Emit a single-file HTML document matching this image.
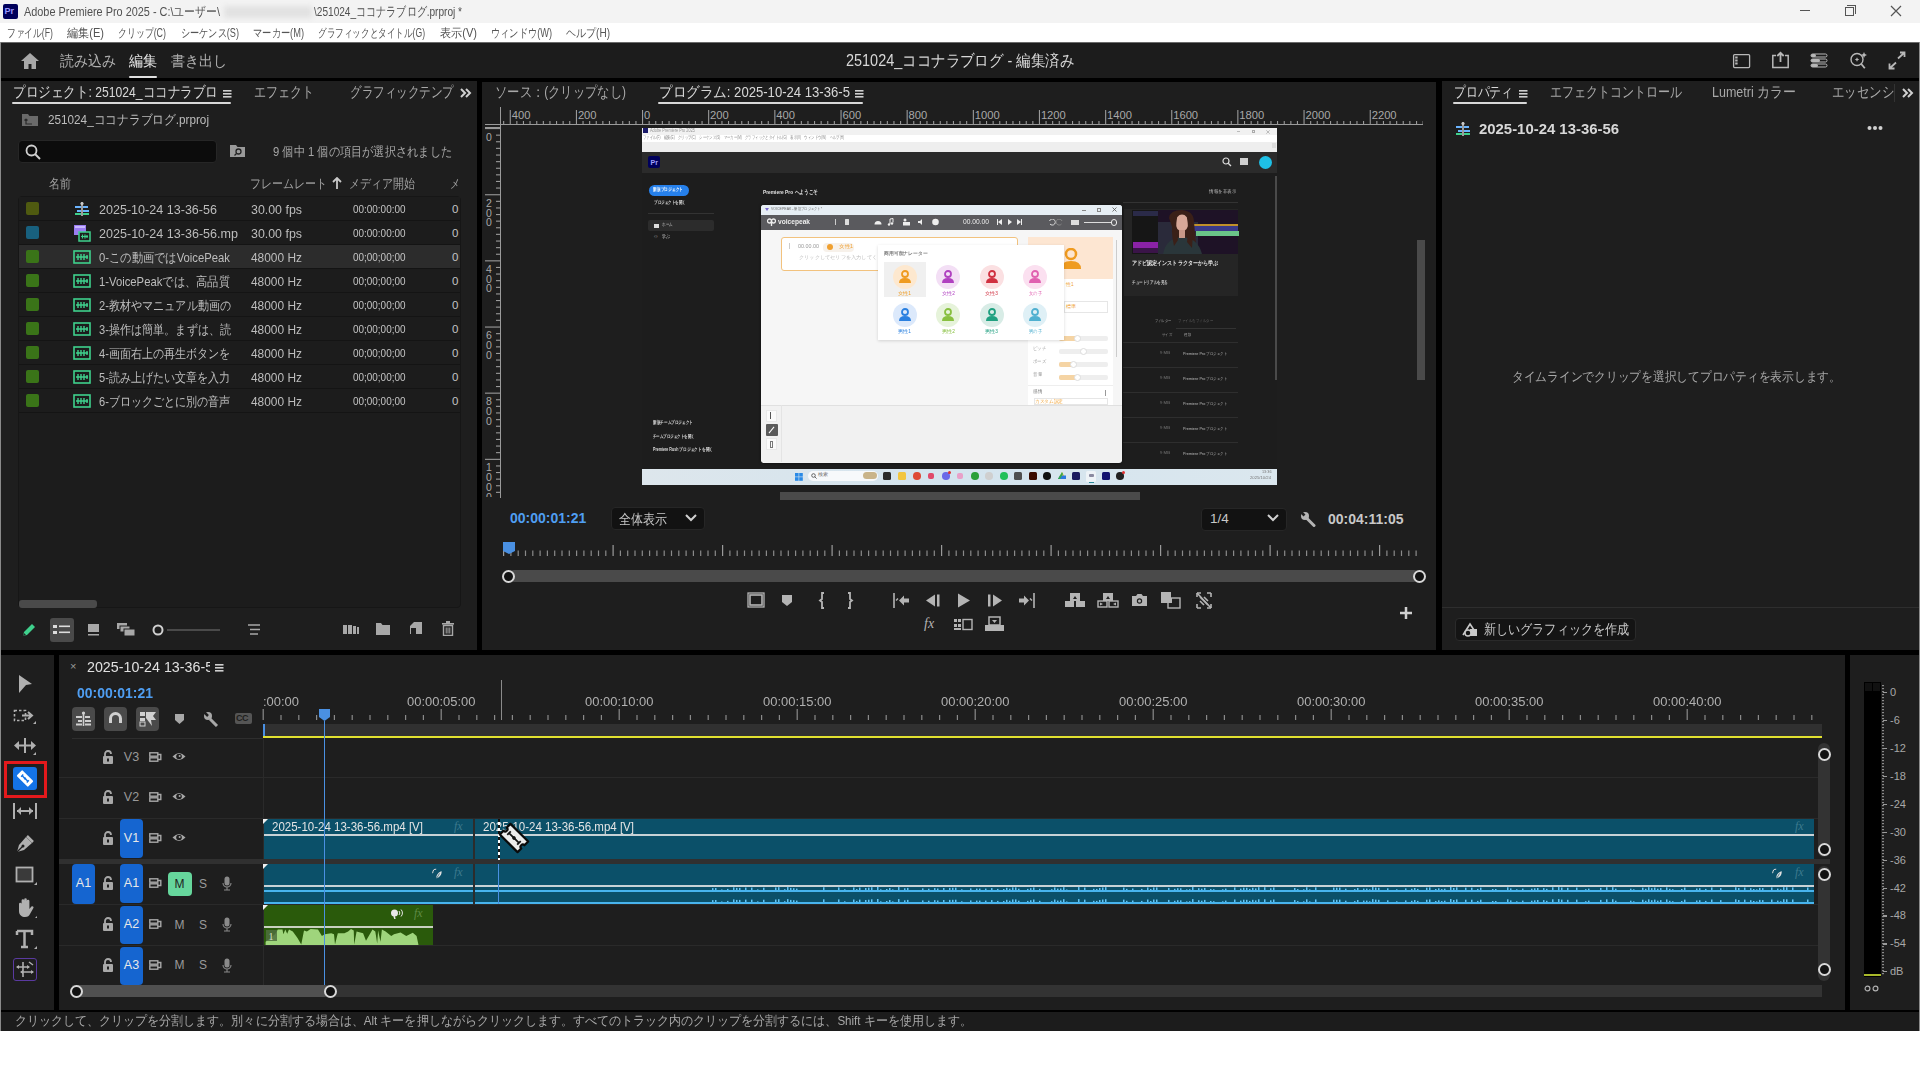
<!DOCTYPE html>
<html><head><meta charset="utf-8"><title>Premiere</title><style>
*{margin:0;padding:0;box-sizing:border-box}
html,body{width:1920px;height:1080px;overflow:hidden;background:#fff;font-family:"Liberation Sans",sans-serif}
.a{position:absolute}
.t{position:absolute;white-space:nowrap;line-height:1}
.pn{position:absolute;background:#1e1e1e}
.ic{position:absolute}
</style></head><body>
<div class="a" style="left:0;top:0;width:1920px;height:23px;background:#f3f3f3"></div>
<div class="a" style="left:3px;top:4px;width:15px;height:15px;background:#00005b;border-radius:2px"></div>
<div class="t" style="left:4.5px;top:7px;font-size:9px;color:#9999ff;font-weight:bold">Pr</div>
<div class="t f" style="left:24px;top:5.1px;width:196px;font-size:13px;color:#505050;">Adobe Premiere Pro 2025 - C:\ユーザー\</div>
<div class="a" style="left:224px;top:6px;width:88px;height:12px;background:#e2e2e2;filter:blur(2.5px)"></div>
<div class="t f" style="left:314px;top:5.1px;width:148px;font-size:13px;color:#505050;">\251024_ココナラブログ.prproj *</div>
<div class="a" style="left:1800px;top:10px;width:10px;height:1px;background:#555"></div>
<div class="a" style="left:1845px;top:7px;width:9px;height:9px;border:1px solid #555"></div>
<div class="a" style="left:1847px;top:5px;width:9px;height:9px;border-top:1px solid #555;border-right:1px solid #555"></div>
<svg class="a" style="left:1890px;top:5px" width="12" height="12"><path d="M1 1L11 11M11 1L1 11" stroke="#555" stroke-width="1.2"/></svg>
<div class="a" style="left:0;top:23px;width:1920px;height:19px;background:#fff"></div>
<div class="t f" style="left:7px;top:26.6px;width:46px;font-size:12px;color:#555;">ファイル(F)</div>
<div class="t f" style="left:67px;top:26.6px;width:37px;font-size:12px;color:#555;">編集(E)</div>
<div class="t f" style="left:118px;top:26.6px;width:48px;font-size:12px;color:#555;">クリップ(C)</div>
<div class="t f" style="left:181px;top:26.6px;width:58px;font-size:12px;color:#555;">シーケンス(S)</div>
<div class="t f" style="left:253px;top:26.6px;width:51px;font-size:12px;color:#555;">マーカー(M)</div>
<div class="t f" style="left:318px;top:26.6px;width:107px;font-size:12px;color:#555;">グラフィックとタイトル(G)</div>
<div class="t f" style="left:440px;top:26.6px;width:37px;font-size:12px;color:#555;">表示(V)</div>
<div class="t f" style="left:491px;top:26.6px;width:61px;font-size:12px;color:#555;">ウィンドウ(W)</div>
<div class="t f" style="left:566px;top:26.6px;width:44px;font-size:12px;color:#555;">ヘルプ(H)</div>
<div class="a" style="left:0;top:42px;width:1920px;height:38px;background:#000"></div>
<div class="a" style="left:1px;top:42px;width:1918px;height:1px;background:#6a6a6a"></div>
<div class="a" style="left:1px;top:43px;width:1918px;height:35px;background:#1c1c1c"></div>
<svg class="a" style="left:20px;top:52px" width="20" height="18"><path d="M10 1L1 9h3v8h4.5v-5h3v5H16V9h3z" fill="#a8a8a8"/></svg>
<div class="t f" style="left:60px;top:53.1px;width:56px;font-size:15px;color:#b0b0b0;">読み込み</div>
<div class="t f" style="left:129px;top:53.1px;width:28px;font-size:15px;color:#e6e6e6;">編集</div>
<div class="a" style="left:129px;top:76px;width:28px;height:2px;background:#e0e0e0;border-radius:1px"></div>
<div class="t f" style="left:171px;top:53.1px;width:56px;font-size:15px;color:#b0b0b0;">書き出し</div>
<div class="t f" style="left:846px;top:52.7px;width:228px;font-size:16px;color:#d8d8d8;">251024_ココナラブログ - 編集済み</div>
<svg class="a" style="left:1732px;top:53px" width="20" height="16"><rect x="1.6" y="1.6" width="16" height="13" rx="1" fill="none" stroke="#b8b8b8" stroke-width="1.3"/><rect x="3.2" y="3.5" width="2.4" height="2" fill="#b8b8b8"/><rect x="3.2" y="6.5" width="2.4" height="2" fill="#b8b8b8"/><rect x="3.2" y="9.5" width="2.4" height="2" fill="#b8b8b8"/></svg>
<svg class="a" style="left:1771px;top:51px" width="19" height="18"><path d="M5 4.5H1.8v12h15.4v-12H14" fill="none" stroke="#b8b8b8" stroke-width="1.5"/><path d="M9.5 11V1.8M6.3 5l3.2-3.2L12.7 5" fill="none" stroke="#b8b8b8" stroke-width="1.8"/></svg>
<svg class="a" style="left:1810px;top:53px" width="18" height="15"><rect x="1" y="1" width="16" height="3" rx="1.5" fill="none" stroke="#b8b8b8" stroke-width="1"/><rect x="1" y="1" width="5" height="3" rx="1.5" fill="#b8b8b8"/><rect x="1" y="6" width="16" height="3" rx="1.5" fill="none" stroke="#b8b8b8" stroke-width="1"/><rect x="1" y="6" width="9" height="3" rx="1.5" fill="#b8b8b8"/><rect x="1" y="11" width="16" height="3" rx="1.5" fill="none" stroke="#b8b8b8" stroke-width="1"/><rect x="1" y="11" width="7" height="3" rx="1.5" fill="#b8b8b8"/></svg>
<svg class="a" style="left:1849px;top:51px" width="19" height="19"><circle cx="8" cy="8.5" r="6" fill="none" stroke="#b8b8b8" stroke-width="1.4"/><path d="M12.3 13l3.5 4.3" stroke="#b8b8b8" stroke-width="1.8"/><path d="M8 6.3l0.7 1.5 1.5 0.7-1.5 0.7L8 10.7l-0.7-1.5-1.5-0.7 1.5-0.7z" fill="#b8b8b8"/><path d="M15 1l0.9 2.1 2.1 0.9-2.1 0.9L15 7l-0.9-2.1-2.1-0.9 2.1-0.9z" fill="#b8b8b8"/></svg>
<svg class="a" style="left:1887px;top:51px" width="20" height="19"><path d="M11 7.5L17.5 1.5M13 1.5h4.5V6" fill="none" stroke="#b8b8b8" stroke-width="1.8"/><path d="M9 11.5L2.5 17.5M2.5 12.5v5h5" fill="none" stroke="#b8b8b8" stroke-width="1.8"/></svg>
<div class="a" style="left:0;top:80px;width:1920px;height:951px;background:#000"></div>
<div class="a" style="left:0;top:42px;width:1px;height:989px;background:#8a8a8a"></div>
<div class="a" style="left:1919px;top:42px;width:1px;height:989px;background:#8a8a8a"></div>
<div class="pn" style="left:1px;top:81px;width:476px;height:569px"></div>
<div class="pn" style="left:482px;top:82px;width:954px;height:568px"></div>
<div class="pn" style="left:1442px;top:81px;width:477px;height:569px"></div>
<div class="pn" style="left:1px;top:655px;width:53px;height:355px"></div>
<div class="pn" style="left:59px;top:655px;width:1786px;height:355px"></div>
<div class="pn" style="left:1850px;top:655px;width:69px;height:355px"></div>
<div class="a" style="left:1px;top:1012px;width:1918px;height:19px;background:#1c1c1c"></div>
<div class="t f" style="left:15px;top:1014.9px;width:957px;font-size:12.5px;color:#a8a8a8;">クリックして、クリップを分割します。別々に分割する場合は、Alt キーを押しながらクリックします。すべてのトラック内のクリップを分割するには、Shift キーを使用します。</div>
<div class="t f" style="left:13px;top:85.4px;width:205px;font-size:14.5px;color:#d8d8d8;">プロジェクト: 251024_ココナラブロ</div>
<svg class="a" style="left:222.5px;top:88.5px" width="9" height="9"><rect x="0" y="1" width="8.5" height="1.6" fill="#d0d0d0"/><rect x="0" y="4" width="8.5" height="1.6" fill="#d0d0d0"/><rect x="0" y="7" width="8.5" height="1.6" fill="#d0d0d0"/></svg>
<div class="a" style="left:12px;top:102px;width:219px;height:2px;background:#d8d8d8;border-radius:1px"></div>
<div class="t f" style="left:254px;top:85.4px;width:60px;font-size:14.5px;color:#a8a8a8;">エフェクト</div>
<div class="t f" style="left:350px;top:85.4px;width:104px;font-size:14.5px;color:#a8a8a8;">グラフィックテンプ</div>
<div class="a" style="left:454px;top:84px;width:3px;height:18px;background:#1e1e1e"></div>
<svg class="a" style="left:459px;top:87px" width="14" height="12"><path d="M2 2l4 4-4 4M7 2l4 4-4 4" fill="none" stroke="#d0d0d0" stroke-width="2"/></svg>
<svg class="a" style="left:22px;top:113px" width="17" height="14"><path d="M0 1h6l1.5 2H16v10H0z" fill="#6a6a6a"/><path d="M4 6v5h6M4 6l-1.5 1.5M4 6l1.5 1.5" stroke="#2a2a2a" stroke-width="1.2" fill="none"/></svg>
<div class="t f" style="left:48px;top:113.1px;width:161px;font-size:13px;color:#bdbdbd;">251024_ココナラブログ.prproj</div>
<div class="a" style="left:18px;top:140px;width:199px;height:23px;background:#0c0c0c;border-radius:4px;border:1px solid #262626"></div>
<svg class="a" style="left:25px;top:144px" width="16" height="16"><circle cx="6.5" cy="6.5" r="5" fill="none" stroke="#d0d0d0" stroke-width="1.8"/><path d="M10 10l5 5" stroke="#d0d0d0" stroke-width="2"/></svg>
<svg class="a" style="left:230px;top:144px" width="16" height="14"><path d="M0 1h6l1.5 2H15v10H0z" fill="#9a9a9a"/><circle cx="8.5" cy="7.5" r="2.5" fill="none" stroke="#222" stroke-width="1.3"/><path d="M6.5 9.5l-2 2" stroke="#222" stroke-width="1.3"/></svg>
<div class="t f" style="left:273px;top:145.1px;width:179px;font-size:13px;color:#a8a8a8;">9 個中 1 個の項目が選択されました</div>
<div class="t f" style="left:49px;top:178.4px;width:22px;font-size:12.5px;color:#a0a0a0;">名前</div>
<div class="t f" style="left:250px;top:178.4px;width:77px;font-size:12.5px;color:#a0a0a0;">フレームレート</div>
<svg class="a" style="left:332px;top:177px" width="10" height="12"><path d="M5 1v11M1 5l4-4 4 4" fill="none" stroke="#c8c8c8" stroke-width="1.8"/></svg>
<div class="t f" style="left:349px;top:178.4px;width:66px;font-size:12.5px;color:#a0a0a0;">メディア開始</div>
<div class="t f" style="left:450px;top:178.4px;width:10px;font-size:12.5px;color:#a0a0a0;">メ</div>
<div class="a" style="left:18px;top:196px;width:443px;height:412px;border:1px solid #161616;border-radius:4px;background:#1c1c1c"></div>
<div class="a" style="left:19px;top:197px;width:441px;height:23px;background:#1c1c1c"></div>
<div class="a" style="left:19px;top:220px;width:441px;height:1px;background:#141414"></div>
<div class="a" style="left:26px;top:202px;width:13px;height:13px;background:#4f5a10;border-radius:2px"></div>
<svg class="a" style="left:74px;top:201px" width="16" height="16"><path d="M8 1v14" stroke="#c8c8c8" stroke-width="1.5"/><circle cx="8" cy="2.5" r="1.6" fill="#c8c8c8"/><rect x="1" y="5" width="6" height="2" fill="#6ab4ff"/><rect x="9" y="5" width="5" height="2" fill="#6ab4ff"/><rect x="3" y="9" width="4" height="2" fill="#6ab4ff"/><rect x="9" y="9" width="6" height="2" fill="#6ab4ff"/><rect x="1" y="12" width="6" height="2" fill="#3fd18d"/><rect x="9" y="12" width="6" height="2" fill="#3fd18d"/></svg>
<div class="t f" style="left:99px;top:202.6px;width:118px;font-size:13px;color:#bdbdbd;">2025-10-24 13-36-56</div>
<div class="t f" style="left:250.5px;top:202.6px;width:51px;font-size:13px;color:#bdbdbd;">30.00 fps</div>
<div class="t f" style="left:352.5px;top:204.1px;width:52.5px;font-size:11px;color:#c4c4c4;">00:00:00:00</div>
<div class="t" style="left:452px;top:203.9px;font-size:11.5px;color:#c4c4c4;">0</div>
<div class="a" style="left:19px;top:221px;width:441px;height:23px;background:#1c1c1c"></div>
<div class="a" style="left:19px;top:244px;width:441px;height:1px;background:#141414"></div>
<div class="a" style="left:26px;top:226px;width:13px;height:13px;background:#18607e;border-radius:2px"></div>
<svg class="a" style="left:73px;top:224px" width="18" height="18"><rect x="1" y="1" width="12" height="10" fill="#9a7cf0"/><rect x="2" y="2" width="10" height="2" fill="#c9b8ff"/><rect x="6" y="8" width="11" height="9" fill="#1e1e1e" stroke="#3fd18d" stroke-width="1.5"/><path d="M8 12.5h7M9.5 10.5v4M12 10.5v4M14 11v3" stroke="#3fd18d" stroke-width="1.2"/></svg>
<div class="t f" style="left:99px;top:226.6px;width:139px;font-size:13px;color:#bdbdbd;">2025-10-24 13-36-56.mp</div>
<div class="t f" style="left:250.5px;top:226.6px;width:51px;font-size:13px;color:#bdbdbd;">30.00 fps</div>
<div class="t f" style="left:352.5px;top:228.1px;width:52.5px;font-size:11px;color:#c4c4c4;">00:00:00:00</div>
<div class="t" style="left:452px;top:227.9px;font-size:11.5px;color:#c4c4c4;">0</div>
<div class="a" style="left:19px;top:245px;width:441px;height:23px;background:#2c2c2c"></div>
<div class="a" style="left:19px;top:268px;width:441px;height:1px;background:#141414"></div>
<div class="a" style="left:26px;top:250px;width:13px;height:13px;background:#3a7418;border-radius:2px"></div>
<svg class="a" style="left:73px;top:250px" width="18" height="14"><rect x="1" y="1" width="16" height="12" fill="none" stroke="#3fd18d" stroke-width="1.6"/><path d="M3 7h12M5 4v6M8 4v6M11 4v6M14 5v4" stroke="#3fd18d" stroke-width="1.4"/></svg>
<div class="t f" style="left:99px;top:250.6px;width:131px;font-size:13px;color:#bdbdbd;">0-この動画ではVoicePeak</div>
<div class="t f" style="left:250.5px;top:250.6px;width:51px;font-size:13px;color:#bdbdbd;">48000 Hz</div>
<div class="t f" style="left:352.5px;top:252.1px;width:52.5px;font-size:11px;color:#c4c4c4;">00;00;00;00</div>
<div class="t" style="left:452px;top:251.9px;font-size:11.5px;color:#c4c4c4;">0</div>
<div class="a" style="left:19px;top:269px;width:441px;height:23px;background:#1c1c1c"></div>
<div class="a" style="left:19px;top:292px;width:441px;height:1px;background:#141414"></div>
<div class="a" style="left:26px;top:274px;width:13px;height:13px;background:#3a7418;border-radius:2px"></div>
<svg class="a" style="left:73px;top:274px" width="18" height="14"><rect x="1" y="1" width="16" height="12" fill="none" stroke="#3fd18d" stroke-width="1.6"/><path d="M3 7h12M5 4v6M8 4v6M11 4v6M14 5v4" stroke="#3fd18d" stroke-width="1.4"/></svg>
<div class="t f" style="left:99px;top:274.6px;width:131px;font-size:13px;color:#bdbdbd;">1-VoicePeakでは、高品質</div>
<div class="t f" style="left:250.5px;top:274.6px;width:51px;font-size:13px;color:#bdbdbd;">48000 Hz</div>
<div class="t f" style="left:352.5px;top:276.1px;width:52.5px;font-size:11px;color:#c4c4c4;">00;00;00;00</div>
<div class="t" style="left:452px;top:275.9px;font-size:11.5px;color:#c4c4c4;">0</div>
<div class="a" style="left:19px;top:293px;width:441px;height:23px;background:#1c1c1c"></div>
<div class="a" style="left:19px;top:316px;width:441px;height:1px;background:#141414"></div>
<div class="a" style="left:26px;top:298px;width:13px;height:13px;background:#3a7418;border-radius:2px"></div>
<svg class="a" style="left:73px;top:298px" width="18" height="14"><rect x="1" y="1" width="16" height="12" fill="none" stroke="#3fd18d" stroke-width="1.6"/><path d="M3 7h12M5 4v6M8 4v6M11 4v6M14 5v4" stroke="#3fd18d" stroke-width="1.4"/></svg>
<div class="t f" style="left:99px;top:298.6px;width:132px;font-size:13px;color:#bdbdbd;">2-教材やマニュアル動画の</div>
<div class="t f" style="left:250.5px;top:298.6px;width:51px;font-size:13px;color:#bdbdbd;">48000 Hz</div>
<div class="t f" style="left:352.5px;top:300.1px;width:52.5px;font-size:11px;color:#c4c4c4;">00;00;00;00</div>
<div class="t" style="left:452px;top:299.9px;font-size:11.5px;color:#c4c4c4;">0</div>
<div class="a" style="left:19px;top:317px;width:441px;height:23px;background:#1c1c1c"></div>
<div class="a" style="left:19px;top:340px;width:441px;height:1px;background:#141414"></div>
<div class="a" style="left:26px;top:322px;width:13px;height:13px;background:#3a7418;border-radius:2px"></div>
<svg class="a" style="left:73px;top:322px" width="18" height="14"><rect x="1" y="1" width="16" height="12" fill="none" stroke="#3fd18d" stroke-width="1.6"/><path d="M3 7h12M5 4v6M8 4v6M11 4v6M14 5v4" stroke="#3fd18d" stroke-width="1.4"/></svg>
<div class="t f" style="left:99px;top:322.6px;width:132px;font-size:13px;color:#bdbdbd;">3-操作は簡単。まずは、読</div>
<div class="t f" style="left:250.5px;top:322.6px;width:51px;font-size:13px;color:#bdbdbd;">48000 Hz</div>
<div class="t f" style="left:352.5px;top:324.1px;width:52.5px;font-size:11px;color:#c4c4c4;">00;00;00;00</div>
<div class="t" style="left:452px;top:323.9px;font-size:11.5px;color:#c4c4c4;">0</div>
<div class="a" style="left:19px;top:341px;width:441px;height:23px;background:#1c1c1c"></div>
<div class="a" style="left:19px;top:364px;width:441px;height:1px;background:#141414"></div>
<div class="a" style="left:26px;top:346px;width:13px;height:13px;background:#3a7418;border-radius:2px"></div>
<svg class="a" style="left:73px;top:346px" width="18" height="14"><rect x="1" y="1" width="16" height="12" fill="none" stroke="#3fd18d" stroke-width="1.6"/><path d="M3 7h12M5 4v6M8 4v6M11 4v6M14 5v4" stroke="#3fd18d" stroke-width="1.4"/></svg>
<div class="t f" style="left:99px;top:346.6px;width:131.5px;font-size:13px;color:#bdbdbd;">4-画面右上の再生ボタンを</div>
<div class="t f" style="left:250.5px;top:346.6px;width:51px;font-size:13px;color:#bdbdbd;">48000 Hz</div>
<div class="t f" style="left:352.5px;top:348.1px;width:52.5px;font-size:11px;color:#c4c4c4;">00;00;00;00</div>
<div class="t" style="left:452px;top:347.9px;font-size:11.5px;color:#c4c4c4;">0</div>
<div class="a" style="left:19px;top:365px;width:441px;height:23px;background:#1c1c1c"></div>
<div class="a" style="left:19px;top:388px;width:441px;height:1px;background:#141414"></div>
<div class="a" style="left:26px;top:370px;width:13px;height:13px;background:#3a7418;border-radius:2px"></div>
<svg class="a" style="left:73px;top:370px" width="18" height="14"><rect x="1" y="1" width="16" height="12" fill="none" stroke="#3fd18d" stroke-width="1.6"/><path d="M3 7h12M5 4v6M8 4v6M11 4v6M14 5v4" stroke="#3fd18d" stroke-width="1.4"/></svg>
<div class="t f" style="left:99px;top:370.6px;width:131.5px;font-size:13px;color:#bdbdbd;">5-読み上げたい文章を入力</div>
<div class="t f" style="left:250.5px;top:370.6px;width:51px;font-size:13px;color:#bdbdbd;">48000 Hz</div>
<div class="t f" style="left:352.5px;top:372.1px;width:52.5px;font-size:11px;color:#c4c4c4;">00;00;00;00</div>
<div class="t" style="left:452px;top:371.9px;font-size:11.5px;color:#c4c4c4;">0</div>
<div class="a" style="left:19px;top:389px;width:441px;height:23px;background:#1c1c1c"></div>
<div class="a" style="left:19px;top:412px;width:441px;height:1px;background:#141414"></div>
<div class="a" style="left:26px;top:394px;width:13px;height:13px;background:#3a7418;border-radius:2px"></div>
<svg class="a" style="left:73px;top:394px" width="18" height="14"><rect x="1" y="1" width="16" height="12" fill="none" stroke="#3fd18d" stroke-width="1.6"/><path d="M3 7h12M5 4v6M8 4v6M11 4v6M14 5v4" stroke="#3fd18d" stroke-width="1.4"/></svg>
<div class="t f" style="left:99px;top:394.6px;width:131.5px;font-size:13px;color:#bdbdbd;">6-ブロックごとに別の音声</div>
<div class="t f" style="left:250.5px;top:394.6px;width:51px;font-size:13px;color:#bdbdbd;">48000 Hz</div>
<div class="t f" style="left:352.5px;top:396.1px;width:52.5px;font-size:11px;color:#c4c4c4;">00;00;00;00</div>
<div class="t" style="left:452px;top:395.9px;font-size:11.5px;color:#c4c4c4;">0</div>
<div class="a" style="left:19px;top:600px;width:78px;height:8px;background:#4a4a4a;border-radius:3px"></div>
<svg class="a" style="left:21px;top:622px" width="16" height="16"><path d="M2 14l1-4 8-8 3 3-8 8z" fill="#3fd18d"/><path d="M2 14l1-3 2 2z" fill="#222"/></svg>
<div class="a" style="left:50px;top:618px;width:24px;height:24px;background:#4a4a4a;border-radius:3px"></div>
<svg class="a" style="left:53px;top:624px" width="18" height="12"><rect x="0" y="1" width="4" height="3" fill="#ddd"/><rect x="6" y="1.5" width="11" height="1.6" fill="#ddd"/><rect x="0" y="7" width="4" height="3" fill="#ddd"/><rect x="6" y="7.5" width="11" height="1.6" fill="#ddd"/></svg>
<svg class="a" style="left:87px;top:623px" width="14" height="13"><rect x="1" y="1" width="11" height="8" fill="#a8a8a8"/><rect x="1" y="11" width="11" height="1.5" fill="#a8a8a8"/></svg>
<svg class="a" style="left:116px;top:622px" width="20" height="14"><rect x="1" y="1" width="10" height="6" fill="#a8a8a8"/><rect x="4" y="4" width="10" height="6" fill="#a8a8a8" stroke="#1e1e1e" stroke-width="1"/><rect x="8" y="7" width="11" height="7" fill="#a8a8a8" stroke="#1e1e1e" stroke-width="1"/></svg>
<svg class="a" style="left:151px;top:623px" width="14" height="14"><circle cx="7" cy="7" r="4.5" fill="none" stroke="#d0d0d0" stroke-width="2"/></svg>
<div class="a" style="left:167px;top:629px;width:53px;height:2px;background:#4a4a4a"></div>
<svg class="a" style="left:247px;top:623px" width="14" height="13"><path d="M1 2h12M3 6.5h10M3 11h8" stroke="#a8a8a8" stroke-width="1.6"/></svg>
<svg class="a" style="left:343px;top:624px" width="17" height="11"><rect x="0" y="1" width="4" height="9" fill="#a8a8a8"/><rect x="5" y="1" width="4" height="9" fill="#a8a8a8"/><rect x="10" y="2" width="3" height="8" fill="#a8a8a8"/><rect x="14" y="3" width="2" height="7" fill="#a8a8a8"/></svg>
<svg class="a" style="left:376px;top:622px" width="15" height="13"><path d="M0 1h5l1.5 2H14v10H0z" fill="#a8a8a8"/></svg>
<svg class="a" style="left:410px;top:622px" width="12" height="13"><path d="M0 4l4-4h8v12H0z" fill="#a8a8a8"/><path d="M1 12V6h5v6" fill="#1e1e1e"/></svg>
<svg class="a" style="left:442px;top:621px" width="12" height="15"><rect x="0" y="2" width="12" height="1.6" fill="#a8a8a8"/><rect x="4" y="0" width="4" height="2" fill="#a8a8a8"/><path d="M1.5 4.5h9v10h-9z" fill="none" stroke="#a8a8a8" stroke-width="1.4"/><path d="M4.2 6.5v6M6 6.5v6M7.8 6.5v6" stroke="#a8a8a8" stroke-width="1"/></svg>
<div class="t f" style="left:494.5px;top:85.4px;width:131px;font-size:14.5px;color:#a8a8a8;">ソース：(クリップなし)</div>
<div class="t f" style="left:659px;top:85.4px;width:191px;font-size:14.5px;color:#d8d8d8;">プログラム: 2025-10-24 13-36-5</div>
<svg class="a" style="left:855px;top:88.5px" width="9" height="9"><rect x="0" y="1" width="8.5" height="1.6" fill="#d0d0d0"/><rect x="0" y="4" width="8.5" height="1.6" fill="#d0d0d0"/><rect x="0" y="7" width="8.5" height="1.6" fill="#d0d0d0"/></svg>
<div class="a" style="left:658px;top:102px;width:205px;height:2px;background:#d8d8d8;border-radius:1px"></div>
<div class="a" style="left:485px;top:124px;width:938px;height:1px;background:#9a9a9a"></div>
<div class="a" style="left:485px;top:127px;width:15px;height:1px;background:#9a9a9a"></div>
<div class="a" style="left:500px;top:107px;width:1px;height:391px;background:#9a9a9a"></div>
<svg class="a" style="left:500px;top:107px" width="923" height="18"><rect x="3.1" y="14" width="1.1" height="4" fill="#9a9a9a"/><rect x="9.7" y="3" width="1.1" height="15" fill="#9a9a9a"/><rect x="16.3" y="14" width="1.1" height="4" fill="#9a9a9a"/><rect x="22.9" y="14" width="1.1" height="4" fill="#9a9a9a"/><rect x="29.5" y="14" width="1.1" height="4" fill="#9a9a9a"/><rect x="36.2" y="14" width="1.1" height="4" fill="#9a9a9a"/><rect x="42.8" y="14" width="1.1" height="4" fill="#9a9a9a"/><rect x="49.4" y="14" width="1.1" height="4" fill="#9a9a9a"/><rect x="56.0" y="14" width="1.1" height="4" fill="#9a9a9a"/><rect x="62.6" y="14" width="1.1" height="4" fill="#9a9a9a"/><rect x="69.2" y="14" width="1.1" height="4" fill="#9a9a9a"/><rect x="75.9" y="3" width="1.1" height="15" fill="#9a9a9a"/><rect x="82.5" y="14" width="1.1" height="4" fill="#9a9a9a"/><rect x="89.1" y="14" width="1.1" height="4" fill="#9a9a9a"/><rect x="95.7" y="14" width="1.1" height="4" fill="#9a9a9a"/><rect x="102.3" y="14" width="1.1" height="4" fill="#9a9a9a"/><rect x="108.9" y="14" width="1.1" height="4" fill="#9a9a9a"/><rect x="115.5" y="14" width="1.1" height="4" fill="#9a9a9a"/><rect x="122.2" y="14" width="1.1" height="4" fill="#9a9a9a"/><rect x="128.8" y="14" width="1.1" height="4" fill="#9a9a9a"/><rect x="135.4" y="14" width="1.1" height="4" fill="#9a9a9a"/><rect x="142.0" y="3" width="1.1" height="15" fill="#9a9a9a"/><rect x="148.6" y="14" width="1.1" height="4" fill="#9a9a9a"/><rect x="155.2" y="14" width="1.1" height="4" fill="#9a9a9a"/><rect x="161.8" y="14" width="1.1" height="4" fill="#9a9a9a"/><rect x="168.5" y="14" width="1.1" height="4" fill="#9a9a9a"/><rect x="175.1" y="14" width="1.1" height="4" fill="#9a9a9a"/><rect x="181.7" y="14" width="1.1" height="4" fill="#9a9a9a"/><rect x="188.3" y="14" width="1.1" height="4" fill="#9a9a9a"/><rect x="194.9" y="14" width="1.1" height="4" fill="#9a9a9a"/><rect x="201.5" y="14" width="1.1" height="4" fill="#9a9a9a"/><rect x="208.1" y="3" width="1.1" height="15" fill="#9a9a9a"/><rect x="214.8" y="14" width="1.1" height="4" fill="#9a9a9a"/><rect x="221.4" y="14" width="1.1" height="4" fill="#9a9a9a"/><rect x="228.0" y="14" width="1.1" height="4" fill="#9a9a9a"/><rect x="234.6" y="14" width="1.1" height="4" fill="#9a9a9a"/><rect x="241.2" y="14" width="1.1" height="4" fill="#9a9a9a"/><rect x="247.8" y="14" width="1.1" height="4" fill="#9a9a9a"/><rect x="254.5" y="14" width="1.1" height="4" fill="#9a9a9a"/><rect x="261.1" y="14" width="1.1" height="4" fill="#9a9a9a"/><rect x="267.7" y="14" width="1.1" height="4" fill="#9a9a9a"/><rect x="274.3" y="3" width="1.1" height="15" fill="#9a9a9a"/><rect x="280.9" y="14" width="1.1" height="4" fill="#9a9a9a"/><rect x="287.5" y="14" width="1.1" height="4" fill="#9a9a9a"/><rect x="294.1" y="14" width="1.1" height="4" fill="#9a9a9a"/><rect x="300.8" y="14" width="1.1" height="4" fill="#9a9a9a"/><rect x="307.4" y="14" width="1.1" height="4" fill="#9a9a9a"/><rect x="314.0" y="14" width="1.1" height="4" fill="#9a9a9a"/><rect x="320.6" y="14" width="1.1" height="4" fill="#9a9a9a"/><rect x="327.2" y="14" width="1.1" height="4" fill="#9a9a9a"/><rect x="333.8" y="14" width="1.1" height="4" fill="#9a9a9a"/><rect x="340.5" y="3" width="1.1" height="15" fill="#9a9a9a"/><rect x="347.1" y="14" width="1.1" height="4" fill="#9a9a9a"/><rect x="353.7" y="14" width="1.1" height="4" fill="#9a9a9a"/><rect x="360.3" y="14" width="1.1" height="4" fill="#9a9a9a"/><rect x="366.9" y="14" width="1.1" height="4" fill="#9a9a9a"/><rect x="373.5" y="14" width="1.1" height="4" fill="#9a9a9a"/><rect x="380.1" y="14" width="1.1" height="4" fill="#9a9a9a"/><rect x="386.8" y="14" width="1.1" height="4" fill="#9a9a9a"/><rect x="393.4" y="14" width="1.1" height="4" fill="#9a9a9a"/><rect x="400.0" y="14" width="1.1" height="4" fill="#9a9a9a"/><rect x="406.6" y="3" width="1.1" height="15" fill="#9a9a9a"/><rect x="413.2" y="14" width="1.1" height="4" fill="#9a9a9a"/><rect x="419.8" y="14" width="1.1" height="4" fill="#9a9a9a"/><rect x="426.4" y="14" width="1.1" height="4" fill="#9a9a9a"/><rect x="433.1" y="14" width="1.1" height="4" fill="#9a9a9a"/><rect x="439.7" y="14" width="1.1" height="4" fill="#9a9a9a"/><rect x="446.3" y="14" width="1.1" height="4" fill="#9a9a9a"/><rect x="452.9" y="14" width="1.1" height="4" fill="#9a9a9a"/><rect x="459.5" y="14" width="1.1" height="4" fill="#9a9a9a"/><rect x="466.1" y="14" width="1.1" height="4" fill="#9a9a9a"/><rect x="472.8" y="3" width="1.1" height="15" fill="#9a9a9a"/><rect x="479.4" y="14" width="1.1" height="4" fill="#9a9a9a"/><rect x="486.0" y="14" width="1.1" height="4" fill="#9a9a9a"/><rect x="492.6" y="14" width="1.1" height="4" fill="#9a9a9a"/><rect x="499.2" y="14" width="1.1" height="4" fill="#9a9a9a"/><rect x="505.8" y="14" width="1.1" height="4" fill="#9a9a9a"/><rect x="512.4" y="14" width="1.1" height="4" fill="#9a9a9a"/><rect x="519.1" y="14" width="1.1" height="4" fill="#9a9a9a"/><rect x="525.7" y="14" width="1.1" height="4" fill="#9a9a9a"/><rect x="532.3" y="14" width="1.1" height="4" fill="#9a9a9a"/><rect x="538.9" y="3" width="1.1" height="15" fill="#9a9a9a"/><rect x="545.5" y="14" width="1.1" height="4" fill="#9a9a9a"/><rect x="552.1" y="14" width="1.1" height="4" fill="#9a9a9a"/><rect x="558.7" y="14" width="1.1" height="4" fill="#9a9a9a"/><rect x="565.4" y="14" width="1.1" height="4" fill="#9a9a9a"/><rect x="572.0" y="14" width="1.1" height="4" fill="#9a9a9a"/><rect x="578.6" y="14" width="1.1" height="4" fill="#9a9a9a"/><rect x="585.2" y="14" width="1.1" height="4" fill="#9a9a9a"/><rect x="591.8" y="14" width="1.1" height="4" fill="#9a9a9a"/><rect x="598.4" y="14" width="1.1" height="4" fill="#9a9a9a"/><rect x="605.1" y="3" width="1.1" height="15" fill="#9a9a9a"/><rect x="611.7" y="14" width="1.1" height="4" fill="#9a9a9a"/><rect x="618.3" y="14" width="1.1" height="4" fill="#9a9a9a"/><rect x="624.9" y="14" width="1.1" height="4" fill="#9a9a9a"/><rect x="631.5" y="14" width="1.1" height="4" fill="#9a9a9a"/><rect x="638.1" y="14" width="1.1" height="4" fill="#9a9a9a"/><rect x="644.7" y="14" width="1.1" height="4" fill="#9a9a9a"/><rect x="651.4" y="14" width="1.1" height="4" fill="#9a9a9a"/><rect x="658.0" y="14" width="1.1" height="4" fill="#9a9a9a"/><rect x="664.6" y="14" width="1.1" height="4" fill="#9a9a9a"/><rect x="671.2" y="3" width="1.1" height="15" fill="#9a9a9a"/><rect x="677.8" y="14" width="1.1" height="4" fill="#9a9a9a"/><rect x="684.4" y="14" width="1.1" height="4" fill="#9a9a9a"/><rect x="691.0" y="14" width="1.1" height="4" fill="#9a9a9a"/><rect x="697.7" y="14" width="1.1" height="4" fill="#9a9a9a"/><rect x="704.3" y="14" width="1.1" height="4" fill="#9a9a9a"/><rect x="710.9" y="14" width="1.1" height="4" fill="#9a9a9a"/><rect x="717.5" y="14" width="1.1" height="4" fill="#9a9a9a"/><rect x="724.1" y="14" width="1.1" height="4" fill="#9a9a9a"/><rect x="730.7" y="14" width="1.1" height="4" fill="#9a9a9a"/><rect x="737.3" y="3" width="1.1" height="15" fill="#9a9a9a"/><rect x="744.0" y="14" width="1.1" height="4" fill="#9a9a9a"/><rect x="750.6" y="14" width="1.1" height="4" fill="#9a9a9a"/><rect x="757.2" y="14" width="1.1" height="4" fill="#9a9a9a"/><rect x="763.8" y="14" width="1.1" height="4" fill="#9a9a9a"/><rect x="770.4" y="14" width="1.1" height="4" fill="#9a9a9a"/><rect x="777.0" y="14" width="1.1" height="4" fill="#9a9a9a"/><rect x="783.7" y="14" width="1.1" height="4" fill="#9a9a9a"/><rect x="790.3" y="14" width="1.1" height="4" fill="#9a9a9a"/><rect x="796.9" y="14" width="1.1" height="4" fill="#9a9a9a"/><rect x="803.5" y="3" width="1.1" height="15" fill="#9a9a9a"/><rect x="810.1" y="14" width="1.1" height="4" fill="#9a9a9a"/><rect x="816.7" y="14" width="1.1" height="4" fill="#9a9a9a"/><rect x="823.3" y="14" width="1.1" height="4" fill="#9a9a9a"/><rect x="830.0" y="14" width="1.1" height="4" fill="#9a9a9a"/><rect x="836.6" y="14" width="1.1" height="4" fill="#9a9a9a"/><rect x="843.2" y="14" width="1.1" height="4" fill="#9a9a9a"/><rect x="849.8" y="14" width="1.1" height="4" fill="#9a9a9a"/><rect x="856.4" y="14" width="1.1" height="4" fill="#9a9a9a"/><rect x="863.0" y="14" width="1.1" height="4" fill="#9a9a9a"/><rect x="869.7" y="3" width="1.1" height="15" fill="#9a9a9a"/><rect x="876.3" y="14" width="1.1" height="4" fill="#9a9a9a"/><rect x="882.9" y="14" width="1.1" height="4" fill="#9a9a9a"/><rect x="889.5" y="14" width="1.1" height="4" fill="#9a9a9a"/><rect x="896.1" y="14" width="1.1" height="4" fill="#9a9a9a"/><rect x="902.7" y="14" width="1.1" height="4" fill="#9a9a9a"/><rect x="909.3" y="14" width="1.1" height="4" fill="#9a9a9a"/><rect x="916.0" y="14" width="1.1" height="4" fill="#9a9a9a"/><rect x="922.6" y="14" width="1.1" height="4" fill="#9a9a9a"/></svg>
<div class="t" style="left:511.7px;top:109.6px;font-size:11.2px;color:#a8a8a8">400</div>
<div class="t" style="left:577.9px;top:109.6px;font-size:11.2px;color:#a8a8a8">200</div>
<div class="t" style="left:644.0px;top:109.6px;font-size:11.2px;color:#a8a8a8">0</div>
<div class="t" style="left:710.1px;top:109.6px;font-size:11.2px;color:#a8a8a8">200</div>
<div class="t" style="left:776.3px;top:109.6px;font-size:11.2px;color:#a8a8a8">400</div>
<div class="t" style="left:842.5px;top:109.6px;font-size:11.2px;color:#a8a8a8">600</div>
<div class="t" style="left:908.6px;top:109.6px;font-size:11.2px;color:#a8a8a8">800</div>
<div class="t" style="left:974.8px;top:109.6px;font-size:11.2px;color:#a8a8a8">1000</div>
<div class="t" style="left:1040.9px;top:109.6px;font-size:11.2px;color:#a8a8a8">1200</div>
<div class="t" style="left:1107.1px;top:109.6px;font-size:11.2px;color:#a8a8a8">1400</div>
<div class="t" style="left:1173.2px;top:109.6px;font-size:11.2px;color:#a8a8a8">1600</div>
<div class="t" style="left:1239.3px;top:109.6px;font-size:11.2px;color:#a8a8a8">1800</div>
<div class="t" style="left:1305.5px;top:109.6px;font-size:11.2px;color:#a8a8a8">2000</div>
<div class="t" style="left:1371.7px;top:109.6px;font-size:11.2px;color:#a8a8a8">2200</div>
<svg class="a" style="left:485px;top:107px" width="15" height="391"><rect x="0" y="21.0" width="15" height="1.1" fill="#9a9a9a"/><rect x="11" y="27.6" width="4" height="1.1" fill="#9a9a9a"/><rect x="11" y="34.2" width="4" height="1.1" fill="#9a9a9a"/><rect x="11" y="40.8" width="4" height="1.1" fill="#9a9a9a"/><rect x="11" y="47.5" width="4" height="1.1" fill="#9a9a9a"/><rect x="11" y="54.1" width="4" height="1.1" fill="#9a9a9a"/><rect x="11" y="60.7" width="4" height="1.1" fill="#9a9a9a"/><rect x="11" y="67.3" width="4" height="1.1" fill="#9a9a9a"/><rect x="11" y="73.9" width="4" height="1.1" fill="#9a9a9a"/><rect x="11" y="80.5" width="4" height="1.1" fill="#9a9a9a"/><rect x="0" y="87.2" width="15" height="1.1" fill="#9a9a9a"/><rect x="11" y="93.8" width="4" height="1.1" fill="#9a9a9a"/><rect x="11" y="100.4" width="4" height="1.1" fill="#9a9a9a"/><rect x="11" y="107.0" width="4" height="1.1" fill="#9a9a9a"/><rect x="11" y="113.6" width="4" height="1.1" fill="#9a9a9a"/><rect x="11" y="120.2" width="4" height="1.1" fill="#9a9a9a"/><rect x="11" y="126.8" width="4" height="1.1" fill="#9a9a9a"/><rect x="11" y="133.5" width="4" height="1.1" fill="#9a9a9a"/><rect x="11" y="140.1" width="4" height="1.1" fill="#9a9a9a"/><rect x="11" y="146.7" width="4" height="1.1" fill="#9a9a9a"/><rect x="0" y="153.3" width="15" height="1.1" fill="#9a9a9a"/><rect x="11" y="159.9" width="4" height="1.1" fill="#9a9a9a"/><rect x="11" y="166.5" width="4" height="1.1" fill="#9a9a9a"/><rect x="11" y="173.1" width="4" height="1.1" fill="#9a9a9a"/><rect x="11" y="179.8" width="4" height="1.1" fill="#9a9a9a"/><rect x="11" y="186.4" width="4" height="1.1" fill="#9a9a9a"/><rect x="11" y="193.0" width="4" height="1.1" fill="#9a9a9a"/><rect x="11" y="199.6" width="4" height="1.1" fill="#9a9a9a"/><rect x="11" y="206.2" width="4" height="1.1" fill="#9a9a9a"/><rect x="11" y="212.8" width="4" height="1.1" fill="#9a9a9a"/><rect x="0" y="219.5" width="15" height="1.1" fill="#9a9a9a"/><rect x="11" y="226.1" width="4" height="1.1" fill="#9a9a9a"/><rect x="11" y="232.7" width="4" height="1.1" fill="#9a9a9a"/><rect x="11" y="239.3" width="4" height="1.1" fill="#9a9a9a"/><rect x="11" y="245.9" width="4" height="1.1" fill="#9a9a9a"/><rect x="11" y="252.5" width="4" height="1.1" fill="#9a9a9a"/><rect x="11" y="259.1" width="4" height="1.1" fill="#9a9a9a"/><rect x="11" y="265.8" width="4" height="1.1" fill="#9a9a9a"/><rect x="11" y="272.4" width="4" height="1.1" fill="#9a9a9a"/><rect x="11" y="279.0" width="4" height="1.1" fill="#9a9a9a"/><rect x="0" y="285.6" width="15" height="1.1" fill="#9a9a9a"/><rect x="11" y="292.2" width="4" height="1.1" fill="#9a9a9a"/><rect x="11" y="298.8" width="4" height="1.1" fill="#9a9a9a"/><rect x="11" y="305.4" width="4" height="1.1" fill="#9a9a9a"/><rect x="11" y="312.1" width="4" height="1.1" fill="#9a9a9a"/><rect x="11" y="318.7" width="4" height="1.1" fill="#9a9a9a"/><rect x="11" y="325.3" width="4" height="1.1" fill="#9a9a9a"/><rect x="11" y="331.9" width="4" height="1.1" fill="#9a9a9a"/><rect x="11" y="338.5" width="4" height="1.1" fill="#9a9a9a"/><rect x="11" y="345.1" width="4" height="1.1" fill="#9a9a9a"/><rect x="0" y="351.8" width="15" height="1.1" fill="#9a9a9a"/><rect x="11" y="358.4" width="4" height="1.1" fill="#9a9a9a"/><rect x="11" y="365.0" width="4" height="1.1" fill="#9a9a9a"/><rect x="11" y="371.6" width="4" height="1.1" fill="#9a9a9a"/><rect x="11" y="378.2" width="4" height="1.1" fill="#9a9a9a"/><rect x="11" y="384.8" width="4" height="1.1" fill="#9a9a9a"/></svg>
<div class="a" style="left:485px;top:128px;width:11px;height:369px;overflow:hidden">
<div class="t" style="left:1px;top:3.5px;font-size:10.5px;color:#a8a8a8">0</div>
<div class="t" style="left:1px;top:69.7px;font-size:10.5px;color:#a8a8a8">2</div>
<div class="t" style="left:1px;top:79.5px;font-size:10.5px;color:#a8a8a8">0</div>
<div class="t" style="left:1px;top:89.2px;font-size:10.5px;color:#a8a8a8">0</div>
<div class="t" style="left:1px;top:135.8px;font-size:10.5px;color:#a8a8a8">4</div>
<div class="t" style="left:1px;top:145.6px;font-size:10.5px;color:#a8a8a8">0</div>
<div class="t" style="left:1px;top:155.4px;font-size:10.5px;color:#a8a8a8">0</div>
<div class="t" style="left:1px;top:202.0px;font-size:10.5px;color:#a8a8a8">6</div>
<div class="t" style="left:1px;top:211.8px;font-size:10.5px;color:#a8a8a8">0</div>
<div class="t" style="left:1px;top:221.6px;font-size:10.5px;color:#a8a8a8">0</div>
<div class="t" style="left:1px;top:268.1px;font-size:10.5px;color:#a8a8a8">8</div>
<div class="t" style="left:1px;top:277.9px;font-size:10.5px;color:#a8a8a8">0</div>
<div class="t" style="left:1px;top:287.7px;font-size:10.5px;color:#a8a8a8">0</div>
<div class="t" style="left:1px;top:334.3px;font-size:10.5px;color:#a8a8a8">1</div>
<div class="t" style="left:1px;top:344.1px;font-size:10.5px;color:#a8a8a8">0</div>
<div class="t" style="left:1px;top:353.9px;font-size:10.5px;color:#a8a8a8">0</div>
<div class="t" style="left:1px;top:363.7px;font-size:10.5px;color:#a8a8a8">0</div>
</div>
<div class="a" style="left:642px;top:128px;width:635px;height:357px;background:#1e1e1e;overflow:hidden">
<div class="a" style="left:0.0px;top:-1.0px;width:635.0px;height:8.0px;background:#f1f1f1"></div>
<div class="a" style="left:1.0px;top:0.0px;width:5.0px;height:5.0px;background:#1a1a6a"></div>
<div class="t f" style="left:8.0px;top:0.5px;width:45px;font-size:4.5px;color:#999;">Adobe Premiere Pro 2025</div>
<div class="a" style="left:0.0px;top:7.0px;width:635.0px;height:7.0px;background:#fff"></div>
<div class="t f" style="left:1.0px;top:8.0px;width:201px;font-size:4.5px;color:#888;">ファイル(F)　編集(E)　クリップ(C)　シーケンス(S)　マーカー(M)　グラフィックとタイトル(G)　表示(V)　ウィンドウ(W)　ヘルプ(H)</div>
<div class="a" style="left:0.0px;top:13.5px;width:635.0px;height:10.0px;background:#eeeeee"></div>
<div class="a" style="left:630.0px;top:15.0px;width:4.0px;height:5.0px;background:#ddd"></div>
<div class="a" style="left:595.0px;top:3.0px;width:3.0px;height:0.6px;background:#bbb"></div>
<div class="a" style="left:610.0px;top:2.0px;width:3.0px;height:3.0px;border:0.6px solid #aaa"></div>
<svg class="a" style="left:624px;top:1.5px" width="4" height="4"><path d="M0.3 0.3l3.4 3.4M3.7 0.3l-3.4 3.4" stroke="#999" stroke-width="0.6"/></svg>
<div class="a" style="left:0.0px;top:23.5px;width:635.0px;height:21.0px;background:#2b2b2b"></div>
<div class="a" style="left:6.0px;top:28.0px;width:12.0px;height:12.0px;background:#00005b;border-radius:2px"></div>
<div class="t" style="left:8.5px;top:30.5px;font-size:7px;color:#a0a0ff;font-weight:bold">Pr</div>
<svg class="a" style="left:580px;top:29px" width="10" height="10"><circle cx="4" cy="4" r="3" fill="none" stroke="#ddd" stroke-width="1.2"/><path d="M6.2 6.2L9 9" stroke="#ddd" stroke-width="1.3"/></svg>
<div class="a" style="left:598.0px;top:30.0px;width:8.0px;height:7.0px;background:#cfcfcf"></div>
<div class="a" style="left:617.0px;top:28.0px;width:13.0px;height:13.0px;background:#1ec0e6;border-radius:50%"></div>
<div class="a" style="left:0.0px;top:44.5px;width:635.0px;height:296.0px;background:#1d1d1d"></div>
<div class="a" style="left:633.0px;top:48.0px;width:1.5px;height:204.0px;background:#4a4a4a"></div>
<div class="a" style="left:6.5px;top:56.5px;width:40.0px;height:11.0px;background:#2680eb;border-radius:6px"></div>
<div class="t f" style="left:11.3px;top:59.5px;width:30px;font-size:4.8px;color:#fff;font-weight:bold">新規プロジェクト</div>
<div class="t f" style="left:11.5px;top:72.5px;width:31.5px;font-size:4.8px;color:#ddd;font-weight:bold">プロジェクトを開く</div>
<div class="a" style="left:6.0px;top:85.0px;width:66.0px;height:0.7px;background:#333"></div>
<div class="a" style="left:6.0px;top:92.0px;width:66.0px;height:11.0px;background:#2c2c2c;border-radius:2px"></div>
<div class="a" style="left:11.5px;top:95.5px;width:5.0px;height:4.0px;background:#ddd"></div>
<div class="t f" style="left:20.0px;top:95.0px;width:10.5px;font-size:4.5px;color:#ccc;">ホーム</div>
<div class="t" style="left:11.0px;top:105.0px;font-size:6px;color:#bbb;">☼</div>
<div class="t f" style="left:20.0px;top:107.0px;width:8px;font-size:4.5px;color:#ccc;">学ぶ</div>
<div class="t f" style="left:11.3px;top:293.0px;width:40px;font-size:4.8px;color:#ddd;font-weight:bold">新規チームプロジェクト</div>
<div class="t f" style="left:11.3px;top:306.5px;width:41.7px;font-size:4.8px;color:#ddd;font-weight:bold">チームプロジェクトを開く</div>
<div class="t f" style="left:11.3px;top:319.5px;width:60px;font-size:4.8px;color:#ddd;font-weight:bold">Premiere Rush プロジェクトを開く</div>
<div class="t f" style="left:121.3px;top:61.0px;width:55px;font-size:6.2px;color:#e0e0e0;font-weight:bold">Premiere Pro へようこそ</div>
<div class="t f" style="left:567.0px;top:61.5px;width:27px;font-size:4.5px;color:#bbb;">情報を非表示</div>
<div class="a" style="left:481.0px;top:74.0px;width:115.0px;height:0.7px;background:#333"></div>
<div class="a" style="left:482.0px;top:81.0px;width:114.0px;height:87.0px;background:#252525"></div>
<div class="a" style="left:490.0px;top:82.0px;width:106.0px;height:44.0px;background:#1e1226"></div>
<div class="a" style="left:490.0px;top:82.0px;width:26.0px;height:44.0px;background:#161616"></div>
<div class="a" style="left:491.0px;top:83.0px;width:25.0px;height:5.0px;background:#2a2a48"></div>
<div class="a" style="left:491.0px;top:114.0px;width:25.0px;height:6.0px;background:#8a22a6"></div>
<div class="a" style="left:491.0px;top:120.0px;width:25.0px;height:5.0px;background:#3a1448"></div>
<div class="a" style="left:516.0px;top:94.0px;width:40.0px;height:32.0px;background:#2a2a3a"></div>
<div class="a" style="left:552.0px;top:96.0px;width:44.0px;height:1.5px;background:#c0902a"></div>
<div class="a" style="left:552.0px;top:98.0px;width:44.0px;height:5.0px;background:#3a3a8a"></div>
<div class="a" style="left:554.0px;top:103.0px;width:43.0px;height:5.0px;background:#6ac488"></div>
<svg class="a" style="left:518px;top:82px" width="46" height="44"><path d="M9 8 Q10 0 22 0 Q34 1 34 12 L36 34 L26 30 L18 34z" fill="#3a2018"/><ellipse cx="22" cy="13" rx="6.5" ry="8.5" fill="#d8a898"/><path d="M3 44 Q6 28 22 27 Q38 28 42 44z" fill="#2a363a"/><rect x="19" y="20" width="6" height="8" fill="#c89888"/><path d="M14 6 Q10 20 14 36 L18 30 Q15 18 17 8z" fill="#3a2018"/><path d="M30 6 Q34 20 32 38 L27 32 Q29 18 27 8z" fill="#3a2018"/></svg>
<div class="t f" style="left:490.0px;top:132.5px;width:86px;font-size:5.5px;color:#e8e8e8;font-weight:bold">アドビ認定インストラクターから学ぶ</div>
<div class="t f" style="left:490.0px;top:152.5px;width:36px;font-size:4.5px;color:#ccc;font-weight:bold">チュートリアルを見る</div>
<div class="t f" style="left:513.0px;top:190.5px;width:16px;font-size:4.3px;color:#aaa;">フィルター</div>
<div class="t f" style="left:535.7px;top:190.5px;width:35px;font-size:4.3px;color:#666;">ファイルをフィルター</div>
<div class="a" style="left:534.0px;top:200.0px;width:60.0px;height:0.6px;background:#333"></div>
<div class="t f" style="left:519.7px;top:205.0px;width:10px;font-size:4.2px;color:#999;">サイズ</div>
<div class="t f" style="left:542.0px;top:205.0px;width:7px;font-size:4.2px;color:#999;">種類</div>
<div class="a" style="left:481.0px;top:214.0px;width:115.0px;height:0.6px;background:#2e2e2e"></div>
<div class="t f" style="left:518.0px;top:224.0px;width:10px;font-size:3.8px;color:#777;">9 MB</div>
<div class="t f" style="left:541.3px;top:223.5px;width:44px;font-size:4.4px;color:#bbb;">Premiere Pro プロジェクト</div>
<div class="a" style="left:481.0px;top:239.0px;width:115.0px;height:0.6px;background:#2e2e2e"></div>
<div class="t f" style="left:518.0px;top:249.0px;width:10px;font-size:3.8px;color:#777;">9 MB</div>
<div class="t f" style="left:541.3px;top:248.5px;width:44px;font-size:4.4px;color:#bbb;">Premiere Pro プロジェクト</div>
<div class="a" style="left:481.0px;top:264.0px;width:115.0px;height:0.6px;background:#2e2e2e"></div>
<div class="t f" style="left:518.0px;top:274.0px;width:10px;font-size:3.8px;color:#777;">9 MB</div>
<div class="t f" style="left:541.3px;top:273.5px;width:44px;font-size:4.4px;color:#bbb;">Premiere Pro プロジェクト</div>
<div class="a" style="left:481.0px;top:289.0px;width:115.0px;height:0.6px;background:#2e2e2e"></div>
<div class="t f" style="left:518.0px;top:299.0px;width:10px;font-size:3.8px;color:#777;">9 MB</div>
<div class="t f" style="left:541.3px;top:298.5px;width:44px;font-size:4.4px;color:#bbb;">Premiere Pro プロジェクト</div>
<div class="a" style="left:481.0px;top:314.0px;width:115.0px;height:0.6px;background:#2e2e2e"></div>
<div class="t f" style="left:518.0px;top:324.0px;width:10px;font-size:3.8px;color:#777;">9 MB</div>
<div class="t f" style="left:541.3px;top:323.5px;width:44px;font-size:4.4px;color:#bbb;">Premiere Pro プロジェクト</div>
<div class="a" style="left:119.3px;top:76.5px;width:360.5px;height:258.0px;background:#f3f3f3;border-radius:3px;box-shadow:0 0 3px rgba(0,0,0,.6)"></div>
<div class="a" style="left:119.3px;top:76.5px;width:360.5px;height:10.5px;background:#e6eef4;border-radius:3px 3px 0 0"></div>
<svg class="a" style="left:123px;top:80px" width="4" height="3"><path d="M0 0h4L2 3z" fill="#7a6ad0"/></svg>
<div class="t f" style="left:128.8px;top:78.5px;width:51px;font-size:4.3px;color:#666;">VOICEPEAK - 新規プロジェクト*</div>
<div class="a" style="left:440.0px;top:81.5px;width:4.0px;height:0.6px;background:#888"></div>
<div class="a" style="left:455.0px;top:79.5px;width:4.0px;height:4.0px;border:0.7px solid #888"></div>
<svg class="a" style="left:470px;top:79px" width="5" height="5"><path d="M0.5 0.5l4 4M4.5 0.5l-4 4" stroke="#555" stroke-width="0.8"/></svg>
<div class="a" style="left:119.3px;top:87.0px;width:360.5px;height:14.5px;background:#5a5a5e"></div>
<svg class="a" style="left:125px;top:89.5px" width="9" height="8"><circle cx="2.5" cy="3" r="2" fill="none" stroke="#eeeeee" stroke-width="1.3"/><circle cx="6.5" cy="3" r="2" fill="none" stroke="#eeeeee" stroke-width="1.3"/><path d="M4.5 3v5" stroke="#eeeeee" stroke-width="1.3"/></svg>
<div class="t f" style="left:136.3px;top:90.5px;width:32px;font-size:6.8px;color:#eeeeee;font-weight:bold">voicepeak</div>
<div class="a" style="left:192.5px;top:91.0px;width:1.0px;height:6.0px;background:#ccc"></div>
<div class="a" style="left:202.5px;top:90.5px;width:4.0px;height:6.0px;background:#ddd;border-radius:0.5px"></div>
<svg class="a" style="left:232px;top:90px" width="80" height="8"><path d="M0.5 6.5a3.5 3.5 0 0 1 7 0z" fill="#eeeeee"/><path d="M16 1v5M16 1l3 -0.5v4" stroke="#eeeeee" stroke-width="1" fill="none"/><circle cx="15" cy="6.5" r="1.2" fill="#eeeeee"/><circle cx="18" cy="5.5" r="1.2" fill="#eeeeee"/><circle cx="31" cy="2" r="1.5" fill="#eeeeee"/><rect x="29" y="4" width="7" height="3.5" fill="#eeeeee"/><path d="M44 3h2l2-2v6l-2-2h-2z" fill="#eeeeee"/><circle cx="61.5" cy="4" r="3.3" fill="#eeeeee"/></svg>
<div class="t f" style="left:320.7px;top:90.2px;width:26px;font-size:7px;color:#eeeeee;">00.00.00</div>
<svg class="a" style="left:355px;top:91px" width="28" height="6"><rect x="0" y="0" width="1" height="6" fill="#eeeeee"/><path d="M5 0v6L1 3z" fill="#eeeeee"/><path d="M11 0v6l4-3z" fill="#eeeeee"/><path d="M20 0v6l4-3z" fill="#eeeeee"/><rect x="24" y="0" width="1" height="6" fill="#eeeeee"/></svg>
<svg class="a" style="left:406px;top:90.5px" width="20" height="7"><path d="M1.5 2a3 3 0 1 1 0.5 3" fill="none" stroke="#ddd" stroke-width="1"/><path d="M14 2a3 3 0 1 0 -0.5 3" fill="none" stroke="#888" stroke-width="1"/></svg>
<div class="a" style="left:429.0px;top:91.5px;width:8.0px;height:5.0px;background:#ddd"></div>
<div class="a" style="left:442.0px;top:93.7px;width:31.0px;height:0.8px;background:#ddd"></div>
<div class="a" style="left:468.5px;top:91.0px;width:6.5px;height:6.5px;background:#5a5a5e;border:1.1px solid #eee;border-radius:50%"></div>
<div class="a" style="left:119.3px;top:101.5px;width:360.5px;height:176.0px;background:#f6f6f6"></div>
<div class="a" style="left:139.0px;top:109.0px;width:237.0px;height:34.0px;background:#fff;border:1px solid #f2c27e;border-radius:3px"></div>
<div class="a" style="left:147.0px;top:115.0px;width:0.8px;height:6.0px;background:#ccc"></div>
<div class="t f" style="left:156.3px;top:116.5px;width:21px;font-size:4.8px;color:#999;">00.00.00</div>
<div class="a" style="left:181.0px;top:115.0px;width:31.0px;height:9.0px;background:#f7f1ea;border-radius:4px"></div>
<div class="a" style="left:185.0px;top:116.0px;width:6.0px;height:6.0px;background:#f0a030;border-radius:50%"></div>
<div class="t f" style="left:197.0px;top:116.5px;width:14px;font-size:4.8px;color:#f0a030;">女性1</div>
<div class="t" style="left:204.0px;top:125.0px;font-size:4px;color:#000;"></div>
<div class="t f" style="left:157.0px;top:128.0px;width:78px;font-size:4.8px;color:#bbb;">クリックしてセリフを入力してく</div>
<div class="a" style="left:386.0px;top:109.0px;width:85.0px;height:170.0px;background:#fff"></div>
<div class="a" style="left:386.0px;top:109.0px;width:85.0px;height:42.0px;background:#fde6d2"></div>
<svg class="a" style="left:418px;top:120px" width="22" height="22"><circle cx="11" cy="6" r="5" fill="none" stroke="#ef9b20" stroke-width="2.5"/><path d="M1 21 Q1 13 11 13 Q21 13 21 21z" fill="#ef9b20"/></svg>
<div class="t" style="left:424.0px;top:155.0px;font-size:4.8px;color:#f0a030;">性1</div>
<div class="a" style="left:422.0px;top:173.0px;width:44.0px;height:12.0px;background:#fff;border:0.7px solid #e6e6e6"></div>
<div class="t f" style="left:424.0px;top:176.5px;width:10px;font-size:4.5px;color:#f0a030;">標準</div>
<div class="a" style="left:417.0px;top:208.0px;width:49.0px;height:5.0px;background:#eee;border-radius:2px"></div>
<div class="a" style="left:417.0px;top:208.0px;width:18.0px;height:5.0px;background:#f5d4a4;border-radius:2px"></div>
<div class="a" style="left:432.0px;top:206.5px;width:7.0px;height:7.0px;background:#fff;border:0.6px solid #ddd;border-radius:50%"></div>
<div class="t f" style="left:391.3px;top:219.0px;width:13px;font-size:4.5px;color:#999;">ピッチ</div>
<div class="a" style="left:417.0px;top:221.0px;width:49.0px;height:5.0px;background:#eee;border-radius:2px"></div>
<div class="a" style="left:438.0px;top:219.5px;width:7.0px;height:7.0px;background:#fff;border:0.6px solid #ddd;border-radius:50%"></div>
<div class="t f" style="left:391.3px;top:232.0px;width:13px;font-size:4.5px;color:#999;">ポーズ</div>
<div class="a" style="left:417.0px;top:234.0px;width:49.0px;height:5.0px;background:#eee;border-radius:2px"></div>
<div class="a" style="left:417.0px;top:234.0px;width:14.0px;height:5.0px;background:#f5d4a4;border-radius:2px"></div>
<div class="a" style="left:428.0px;top:232.5px;width:7.0px;height:7.0px;background:#fff;border:0.6px solid #ddd;border-radius:50%"></div>
<div class="t f" style="left:391.3px;top:245.0px;width:9px;font-size:4.5px;color:#999;">音量</div>
<div class="a" style="left:417.0px;top:247.0px;width:49.0px;height:5.0px;background:#eee;border-radius:2px"></div>
<div class="a" style="left:417.0px;top:247.0px;width:18.0px;height:5.0px;background:#f5d4a4;border-radius:2px"></div>
<div class="a" style="left:432.0px;top:245.5px;width:7.0px;height:7.0px;background:#fff;border:0.6px solid #ddd;border-radius:50%"></div>
<div class="a" style="left:386.0px;top:257.0px;width:85.0px;height:0.6px;background:#eee"></div>
<div class="t f" style="left:391.3px;top:262.0px;width:9px;font-size:4.5px;color:#777;">感情</div>
<div class="a" style="left:463.0px;top:262.0px;width:0.8px;height:6.0px;background:#999"></div>
<div class="a" style="left:392.0px;top:270.0px;width:74.0px;height:7.0px;background:#fff;border:0.7px solid #e6e6e6"></div>
<div class="t f" style="left:393.0px;top:271.5px;width:28px;font-size:4.5px;color:#f0a030;">カスタム設定</div>
<div class="a" style="left:474.0px;top:112.0px;width:1.2px;height:117.0px;background:#ccc"></div>
<div class="a" style="left:235.5px;top:117.0px;width:186.5px;height:95.0px;background:#fff;box-shadow:0 1px 3px rgba(0,0,0,.15)"></div>
<div class="t f" style="left:242.0px;top:124.0px;width:43.5px;font-size:4.5px;color:#777;font-weight:bold">商用可能ナレーター</div>
<div class="a" style="left:242.0px;top:134.0px;width:42.0px;height:35.0px;background:#f0f0f0"></div>
<div class="a" style="left:250.5px;top:136.5px;width:24.0px;height:24.0px;background:#fde8cf;border-radius:50%"></div>
<svg class="a" style="left:255.5px;top:141.5px" width="14" height="14"><circle cx="7" cy="4" r="3" fill="none" stroke="#ef9b20" stroke-width="1.8"/><path d="M1 13 Q1 8 7 8 Q13 8 13 13z" fill="#ef9b20"/></svg>
<div class="t f" style="left:256.0px;top:163.5px;width:13px;font-size:4.6px;color:#ef9b20;">女性1</div>
<div class="a" style="left:294.1px;top:136.5px;width:24.0px;height:24.0px;background:#f3dff5;border-radius:50%"></div>
<svg class="a" style="left:299.1px;top:141.5px" width="14" height="14"><circle cx="7" cy="4" r="3" fill="none" stroke="#b040c0" stroke-width="1.8"/><path d="M1 13 Q1 8 7 8 Q13 8 13 13z" fill="#b040c0"/></svg>
<div class="t f" style="left:299.6px;top:163.5px;width:13px;font-size:4.6px;color:#b040c0;">女性2</div>
<div class="a" style="left:337.7px;top:136.5px;width:24.0px;height:24.0px;background:#fbe0e2;border-radius:50%"></div>
<svg class="a" style="left:342.7px;top:141.5px" width="14" height="14"><circle cx="7" cy="4" r="3" fill="none" stroke="#d03040" stroke-width="1.8"/><path d="M1 13 Q1 8 7 8 Q13 8 13 13z" fill="#d03040"/></svg>
<div class="t f" style="left:343.2px;top:163.5px;width:13px;font-size:4.6px;color:#d03040;">女性3</div>
<div class="a" style="left:381.3px;top:136.5px;width:24.0px;height:24.0px;background:#fbe0f0;border-radius:50%"></div>
<svg class="a" style="left:386.3px;top:141.5px" width="14" height="14"><circle cx="7" cy="4" r="3" fill="none" stroke="#e060b0" stroke-width="1.8"/><path d="M1 13 Q1 8 7 8 Q13 8 13 13z" fill="#e060b0"/></svg>
<div class="t f" style="left:386.8px;top:163.5px;width:13px;font-size:4.6px;color:#e060b0;">女の子</div>
<div class="a" style="left:250.5px;top:175.0px;width:24.0px;height:24.0px;background:#dce9fb;border-radius:50%"></div>
<svg class="a" style="left:255.5px;top:180.0px" width="14" height="14"><circle cx="7" cy="4" r="3" fill="none" stroke="#2a80e0" stroke-width="1.8"/><path d="M1 13 Q1 8 7 8 Q13 8 13 13z" fill="#2a80e0"/></svg>
<div class="t f" style="left:256.0px;top:202.0px;width:13px;font-size:4.6px;color:#2a80e0;">男性1</div>
<div class="a" style="left:294.1px;top:175.0px;width:24.0px;height:24.0px;background:#e6f3da;border-radius:50%"></div>
<svg class="a" style="left:299.1px;top:180.0px" width="14" height="14"><circle cx="7" cy="4" r="3" fill="none" stroke="#88c040" stroke-width="1.8"/><path d="M1 13 Q1 8 7 8 Q13 8 13 13z" fill="#88c040"/></svg>
<div class="t f" style="left:299.6px;top:202.0px;width:13px;font-size:4.6px;color:#88c040;">男性2</div>
<div class="a" style="left:337.7px;top:175.0px;width:24.0px;height:24.0px;background:#d8ece6;border-radius:50%"></div>
<svg class="a" style="left:342.7px;top:180.0px" width="14" height="14"><circle cx="7" cy="4" r="3" fill="none" stroke="#20a080" stroke-width="1.8"/><path d="M1 13 Q1 8 7 8 Q13 8 13 13z" fill="#20a080"/></svg>
<div class="t f" style="left:343.2px;top:202.0px;width:13px;font-size:4.6px;color:#20a080;">男性3</div>
<div class="a" style="left:381.3px;top:175.0px;width:24.0px;height:24.0px;background:#dff0f6;border-radius:50%"></div>
<svg class="a" style="left:386.3px;top:180.0px" width="14" height="14"><circle cx="7" cy="4" r="3" fill="none" stroke="#50b0d0" stroke-width="1.8"/><path d="M1 13 Q1 8 7 8 Q13 8 13 13z" fill="#50b0d0"/></svg>
<div class="t f" style="left:386.8px;top:202.0px;width:13px;font-size:4.6px;color:#50b0d0;">男の子</div>
<div class="a" style="left:119.3px;top:277.0px;width:360.5px;height:57.0px;background:#f1f1f1;border-radius:0 0 3px 3px"></div>
<div class="a" style="left:119.3px;top:277.0px;width:360.5px;height:0.8px;background:#e0e0e0"></div>
<div class="a" style="left:138.5px;top:277.0px;width:0.6px;height:57.0px;background:#e4e4e4"></div>
<div class="a" style="left:124.0px;top:282.0px;width:11.0px;height:12.0px;background:#fafafa;border:0.5px solid #e8e8e8"></div>
<div class="a" style="left:128.0px;top:284.0px;width:1.0px;height:7.0px;background:#555"></div>
<div class="a" style="left:123.5px;top:296.0px;width:12.0px;height:12.0px;background:#5a5a5a;border-radius:1px"></div>
<div class="a" style="left:129.0px;top:297.5px;width:1.0px;height:8.0px;background:#fff;transform:rotate(40deg)"></div>
<div class="a" style="left:124.0px;top:310.0px;width:11.0px;height:12.0px;background:#fafafa;border:0.5px solid #e8e8e8"></div>
<div class="a" style="left:127.5px;top:312.5px;width:3.0px;height:7.0px;border:0.8px solid #777"></div>
<div class="a" style="left:0.0px;top:341.0px;width:635.0px;height:16.0px;background:linear-gradient(90deg,#dde6ec,#d4e4ee 50%,#dbe7ee)"></div>
<svg class="a" style="left:153px;top:345px" width="8" height="8"><rect x="0" y="0" width="3.6" height="3.6" fill="#2a8ae6"/><rect x="4.2" y="0" width="3.6" height="3.6" fill="#2a8ae6"/><rect x="0" y="4.2" width="3.6" height="3.6" fill="#2a8ae6"/><rect x="4.2" y="4.2" width="3.6" height="3.6" fill="#2a8ae6"/></svg>
<div class="a" style="left:166.0px;top:343.0px;width:70.0px;height:9.5px;background:#f7f9fb;border-radius:5px"></div>
<svg class="a" style="left:169px;top:345px" width="6" height="6"><circle cx="2.5" cy="2.5" r="1.8" fill="none" stroke="#444" stroke-width="0.8"/><path d="M3.8 3.8l1.8 1.8" stroke="#444" stroke-width="0.8"/></svg>
<div class="a" style="left:221.0px;top:344.0px;width:14.0px;height:7.0px;background:#c9b48a;border-radius:3.5px"></div>
<div class="t f" style="left:176.3px;top:345.0px;width:10px;font-size:4.5px;color:#777;">検索</div>
<div class="a" style="left:241.1px;top:344.0px;width:7.6px;height:7.6px;background:#2a2a2a;border-radius:1.5px"></div>
<div class="a" style="left:256.1px;top:344.0px;width:7.6px;height:7.6px;background:#f2c640;border-radius:1.5px"></div>
<div class="a" style="left:271.1px;top:344.0px;width:7.6px;height:7.6px;background:#de4a36;border-radius:50%"></div>
<div class="a" style="left:286.0px;top:345.0px;width:6.0px;height:6.0px;background:#e04a6a;border-radius:2px"></div>
<div class="a" style="left:300.2px;top:344.0px;width:7.6px;height:7.6px;background:#6a6ae8;border-radius:50%"></div>
<div class="a" style="left:315.0px;top:345.0px;width:6.0px;height:6.0px;background:#e8a0c8;border-radius:2px"></div>
<div class="a" style="left:329.2px;top:344.0px;width:7.6px;height:7.6px;background:#2aa03a;border-radius:50%"></div>
<div class="a" style="left:343.2px;top:344.0px;width:7.6px;height:7.6px;background:#cfcfcf;border-radius:50%"></div>
<div class="a" style="left:358.2px;top:344.0px;width:7.6px;height:7.6px;background:#22c05a;border-radius:50%"></div>
<div class="a" style="left:372.2px;top:344.0px;width:7.6px;height:7.6px;background:#505050;border-radius:1.5px"></div>
<div class="a" style="left:387.2px;top:344.0px;width:7.6px;height:7.6px;background:#3a0c00;border-radius:1.5px"></div>
<div class="a" style="left:401.2px;top:344.0px;width:7.6px;height:7.6px;background:#101010;border-radius:50%"></div>
<svg class="a" style="left:416px;top:344px" width="8" height="8"><path d="M4 0L8 7H0z" fill="#f0c030"/><path d="M0 7l2-3.5h6L8 7z" fill="#2a7ae0"/><path d="M4 0L0 7l2 0 3-5z" fill="#30a850"/></svg>
<div class="a" style="left:430.2px;top:344.0px;width:7.6px;height:7.6px;background:#1a1a60;border-radius:1.5px"></div>
<div class="a" style="left:444.0px;top:342.5px;width:10.0px;height:11.0px;background:#eef3f7;border-radius:1.5px"></div>
<div class="a" style="left:446.5px;top:346.0px;width:5.0px;height:3.0px;background:#8a8aa0;border-radius:1px"></div>
<div class="a" style="left:446.5px;top:354.0px;width:5.0px;height:0.8px;background:#2a8a9a"></div>
<div class="a" style="left:460.2px;top:344.0px;width:7.6px;height:7.6px;background:#141470;border-radius:1.5px"></div>
<div class="a" style="left:474.2px;top:344.0px;width:7.6px;height:7.6px;background:#202020;border-radius:50%"></div>
<div class="a" style="left:306.0px;top:342.5px;width:3.0px;height:3.0px;background:#e03030;border-radius:50%"></div>
<div class="a" style="left:479.5px;top:342.5px;width:3.0px;height:3.0px;background:#e03030;border-radius:50%"></div>
<div class="a" style="left:590.0px;top:345.0px;width:0.1px;height:0.1px;"></div>
<div class="t f" style="left:619.7px;top:343.0px;width:9.5px;font-size:3.5px;color:#777;">13:36</div>
<div class="t f" style="left:608.0px;top:349.0px;width:21px;font-size:3.5px;color:#777;">2025/10/24</div>
</div>
<div class="a" style="left:1417px;top:240px;width:8px;height:140px;background:#4a4a4a"></div>
<div class="a" style="left:780px;top:492px;width:360px;height:8px;background:#4a4a4a"></div>
<div class="t" style="left:510px;top:511px;font-size:14px;color:#4f9ef2;font-weight:bold">00:00:01:21</div>
<div class="a" style="left:611px;top:507px;width:94px;height:23px;background:#121212;border-radius:4px;border:1px solid #262626"></div>
<div class="t f" style="left:618.5px;top:511.8px;width:48px;font-size:14px;color:#c8c8c8;">全体表示</div>
<svg class="a" style="left:685px;top:514px" width="12" height="8"><path d="M1 1l5 5 5-5" fill="none" stroke="#d0d0d0" stroke-width="2"/></svg>
<div class="a" style="left:1201px;top:507.5px;width:86px;height:23px;background:#121212;border-radius:4px;border:1px solid #262626"></div>
<div class="t" style="left:1210px;top:512px;font-size:13.5px;color:#c8c8c8">1/4</div>
<svg class="a" style="left:1267px;top:514px" width="12" height="8"><path d="M1 1l5 5 5-5" fill="none" stroke="#d0d0d0" stroke-width="2"/></svg>
<svg class="a" style="left:1300px;top:511px" width="16" height="16"><path d="M14 14.5L7 7.5" stroke="#b4b4b4" stroke-width="3" stroke-linecap="round"/><circle cx="5" cy="5" r="4" fill="#b4b4b4"/><path d="M4.5 4.5L1 1" stroke="#1e1e1e" stroke-width="2.6"/></svg>
<div class="t" style="left:1328px;top:512px;font-size:14px;color:#c8c8c8;font-weight:bold">00:04:11:05</div>
<svg class="a" style="left:501px;top:544.5px" width="923" height="11"><rect x="2.0" y="0" width="1.2" height="11" fill="#9a9a9a"/><rect x="9.3" y="5.5" width="1.2" height="5.5" fill="#8a8a8a"/><rect x="16.6" y="5.5" width="1.2" height="5.5" fill="#8a8a8a"/><rect x="23.9" y="5.5" width="1.2" height="5.5" fill="#8a8a8a"/><rect x="31.2" y="5.5" width="1.2" height="5.5" fill="#8a8a8a"/><rect x="38.5" y="5.5" width="1.2" height="5.5" fill="#8a8a8a"/><rect x="45.8" y="5.5" width="1.2" height="5.5" fill="#8a8a8a"/><rect x="53.1" y="5.5" width="1.2" height="5.5" fill="#8a8a8a"/><rect x="60.4" y="5.5" width="1.2" height="5.5" fill="#8a8a8a"/><rect x="67.7" y="5.5" width="1.2" height="5.5" fill="#8a8a8a"/><rect x="75.0" y="5.5" width="1.2" height="5.5" fill="#8a8a8a"/><rect x="82.3" y="5.5" width="1.2" height="5.5" fill="#8a8a8a"/><rect x="89.6" y="5.5" width="1.2" height="5.5" fill="#8a8a8a"/><rect x="96.9" y="5.5" width="1.2" height="5.5" fill="#8a8a8a"/><rect x="104.2" y="5.5" width="1.2" height="5.5" fill="#8a8a8a"/><rect x="111.5" y="0" width="1.2" height="11" fill="#9a9a9a"/><rect x="118.8" y="5.5" width="1.2" height="5.5" fill="#8a8a8a"/><rect x="126.1" y="5.5" width="1.2" height="5.5" fill="#8a8a8a"/><rect x="133.4" y="5.5" width="1.2" height="5.5" fill="#8a8a8a"/><rect x="140.7" y="5.5" width="1.2" height="5.5" fill="#8a8a8a"/><rect x="148.0" y="5.5" width="1.2" height="5.5" fill="#8a8a8a"/><rect x="155.3" y="5.5" width="1.2" height="5.5" fill="#8a8a8a"/><rect x="162.6" y="5.5" width="1.2" height="5.5" fill="#8a8a8a"/><rect x="169.9" y="5.5" width="1.2" height="5.5" fill="#8a8a8a"/><rect x="177.2" y="5.5" width="1.2" height="5.5" fill="#8a8a8a"/><rect x="184.5" y="5.5" width="1.2" height="5.5" fill="#8a8a8a"/><rect x="191.8" y="5.5" width="1.2" height="5.5" fill="#8a8a8a"/><rect x="199.1" y="5.5" width="1.2" height="5.5" fill="#8a8a8a"/><rect x="206.4" y="5.5" width="1.2" height="5.5" fill="#8a8a8a"/><rect x="213.7" y="5.5" width="1.2" height="5.5" fill="#8a8a8a"/><rect x="221.0" y="0" width="1.2" height="11" fill="#9a9a9a"/><rect x="228.3" y="5.5" width="1.2" height="5.5" fill="#8a8a8a"/><rect x="235.6" y="5.5" width="1.2" height="5.5" fill="#8a8a8a"/><rect x="242.9" y="5.5" width="1.2" height="5.5" fill="#8a8a8a"/><rect x="250.2" y="5.5" width="1.2" height="5.5" fill="#8a8a8a"/><rect x="257.5" y="5.5" width="1.2" height="5.5" fill="#8a8a8a"/><rect x="264.8" y="5.5" width="1.2" height="5.5" fill="#8a8a8a"/><rect x="272.1" y="5.5" width="1.2" height="5.5" fill="#8a8a8a"/><rect x="279.4" y="5.5" width="1.2" height="5.5" fill="#8a8a8a"/><rect x="286.7" y="5.5" width="1.2" height="5.5" fill="#8a8a8a"/><rect x="294.0" y="5.5" width="1.2" height="5.5" fill="#8a8a8a"/><rect x="301.3" y="5.5" width="1.2" height="5.5" fill="#8a8a8a"/><rect x="308.6" y="5.5" width="1.2" height="5.5" fill="#8a8a8a"/><rect x="315.9" y="5.5" width="1.2" height="5.5" fill="#8a8a8a"/><rect x="323.2" y="5.5" width="1.2" height="5.5" fill="#8a8a8a"/><rect x="330.5" y="0" width="1.2" height="11" fill="#9a9a9a"/><rect x="337.8" y="5.5" width="1.2" height="5.5" fill="#8a8a8a"/><rect x="345.1" y="5.5" width="1.2" height="5.5" fill="#8a8a8a"/><rect x="352.4" y="5.5" width="1.2" height="5.5" fill="#8a8a8a"/><rect x="359.7" y="5.5" width="1.2" height="5.5" fill="#8a8a8a"/><rect x="367.0" y="5.5" width="1.2" height="5.5" fill="#8a8a8a"/><rect x="374.3" y="5.5" width="1.2" height="5.5" fill="#8a8a8a"/><rect x="381.6" y="5.5" width="1.2" height="5.5" fill="#8a8a8a"/><rect x="388.9" y="5.5" width="1.2" height="5.5" fill="#8a8a8a"/><rect x="396.2" y="5.5" width="1.2" height="5.5" fill="#8a8a8a"/><rect x="403.5" y="5.5" width="1.2" height="5.5" fill="#8a8a8a"/><rect x="410.8" y="5.5" width="1.2" height="5.5" fill="#8a8a8a"/><rect x="418.1" y="5.5" width="1.2" height="5.5" fill="#8a8a8a"/><rect x="425.4" y="5.5" width="1.2" height="5.5" fill="#8a8a8a"/><rect x="432.7" y="5.5" width="1.2" height="5.5" fill="#8a8a8a"/><rect x="440.0" y="0" width="1.2" height="11" fill="#9a9a9a"/><rect x="447.3" y="5.5" width="1.2" height="5.5" fill="#8a8a8a"/><rect x="454.6" y="5.5" width="1.2" height="5.5" fill="#8a8a8a"/><rect x="461.9" y="5.5" width="1.2" height="5.5" fill="#8a8a8a"/><rect x="469.2" y="5.5" width="1.2" height="5.5" fill="#8a8a8a"/><rect x="476.5" y="5.5" width="1.2" height="5.5" fill="#8a8a8a"/><rect x="483.8" y="5.5" width="1.2" height="5.5" fill="#8a8a8a"/><rect x="491.1" y="5.5" width="1.2" height="5.5" fill="#8a8a8a"/><rect x="498.4" y="5.5" width="1.2" height="5.5" fill="#8a8a8a"/><rect x="505.7" y="5.5" width="1.2" height="5.5" fill="#8a8a8a"/><rect x="513.0" y="5.5" width="1.2" height="5.5" fill="#8a8a8a"/><rect x="520.3" y="5.5" width="1.2" height="5.5" fill="#8a8a8a"/><rect x="527.6" y="5.5" width="1.2" height="5.5" fill="#8a8a8a"/><rect x="534.9" y="5.5" width="1.2" height="5.5" fill="#8a8a8a"/><rect x="542.2" y="5.5" width="1.2" height="5.5" fill="#8a8a8a"/><rect x="549.5" y="0" width="1.2" height="11" fill="#9a9a9a"/><rect x="556.8" y="5.5" width="1.2" height="5.5" fill="#8a8a8a"/><rect x="564.1" y="5.5" width="1.2" height="5.5" fill="#8a8a8a"/><rect x="571.4" y="5.5" width="1.2" height="5.5" fill="#8a8a8a"/><rect x="578.7" y="5.5" width="1.2" height="5.5" fill="#8a8a8a"/><rect x="586.0" y="5.5" width="1.2" height="5.5" fill="#8a8a8a"/><rect x="593.3" y="5.5" width="1.2" height="5.5" fill="#8a8a8a"/><rect x="600.6" y="5.5" width="1.2" height="5.5" fill="#8a8a8a"/><rect x="607.9" y="5.5" width="1.2" height="5.5" fill="#8a8a8a"/><rect x="615.2" y="5.5" width="1.2" height="5.5" fill="#8a8a8a"/><rect x="622.5" y="5.5" width="1.2" height="5.5" fill="#8a8a8a"/><rect x="629.8" y="5.5" width="1.2" height="5.5" fill="#8a8a8a"/><rect x="637.1" y="5.5" width="1.2" height="5.5" fill="#8a8a8a"/><rect x="644.4" y="5.5" width="1.2" height="5.5" fill="#8a8a8a"/><rect x="651.7" y="5.5" width="1.2" height="5.5" fill="#8a8a8a"/><rect x="659.0" y="0" width="1.2" height="11" fill="#9a9a9a"/><rect x="666.3" y="5.5" width="1.2" height="5.5" fill="#8a8a8a"/><rect x="673.6" y="5.5" width="1.2" height="5.5" fill="#8a8a8a"/><rect x="680.9" y="5.5" width="1.2" height="5.5" fill="#8a8a8a"/><rect x="688.2" y="5.5" width="1.2" height="5.5" fill="#8a8a8a"/><rect x="695.5" y="5.5" width="1.2" height="5.5" fill="#8a8a8a"/><rect x="702.8" y="5.5" width="1.2" height="5.5" fill="#8a8a8a"/><rect x="710.1" y="5.5" width="1.2" height="5.5" fill="#8a8a8a"/><rect x="717.4" y="5.5" width="1.2" height="5.5" fill="#8a8a8a"/><rect x="724.7" y="5.5" width="1.2" height="5.5" fill="#8a8a8a"/><rect x="732.0" y="5.5" width="1.2" height="5.5" fill="#8a8a8a"/><rect x="739.3" y="5.5" width="1.2" height="5.5" fill="#8a8a8a"/><rect x="746.6" y="5.5" width="1.2" height="5.5" fill="#8a8a8a"/><rect x="753.9" y="5.5" width="1.2" height="5.5" fill="#8a8a8a"/><rect x="761.2" y="5.5" width="1.2" height="5.5" fill="#8a8a8a"/><rect x="768.5" y="0" width="1.2" height="11" fill="#9a9a9a"/><rect x="775.8" y="5.5" width="1.2" height="5.5" fill="#8a8a8a"/><rect x="783.1" y="5.5" width="1.2" height="5.5" fill="#8a8a8a"/><rect x="790.4" y="5.5" width="1.2" height="5.5" fill="#8a8a8a"/><rect x="797.7" y="5.5" width="1.2" height="5.5" fill="#8a8a8a"/><rect x="805.0" y="5.5" width="1.2" height="5.5" fill="#8a8a8a"/><rect x="812.3" y="5.5" width="1.2" height="5.5" fill="#8a8a8a"/><rect x="819.6" y="5.5" width="1.2" height="5.5" fill="#8a8a8a"/><rect x="826.9" y="5.5" width="1.2" height="5.5" fill="#8a8a8a"/><rect x="834.2" y="5.5" width="1.2" height="5.5" fill="#8a8a8a"/><rect x="841.5" y="5.5" width="1.2" height="5.5" fill="#8a8a8a"/><rect x="848.8" y="5.5" width="1.2" height="5.5" fill="#8a8a8a"/><rect x="856.1" y="5.5" width="1.2" height="5.5" fill="#8a8a8a"/><rect x="863.4" y="5.5" width="1.2" height="5.5" fill="#8a8a8a"/><rect x="870.7" y="5.5" width="1.2" height="5.5" fill="#8a8a8a"/><rect x="878.0" y="0" width="1.2" height="11" fill="#9a9a9a"/><rect x="885.3" y="5.5" width="1.2" height="5.5" fill="#8a8a8a"/><rect x="892.6" y="5.5" width="1.2" height="5.5" fill="#8a8a8a"/><rect x="899.9" y="5.5" width="1.2" height="5.5" fill="#8a8a8a"/><rect x="907.2" y="5.5" width="1.2" height="5.5" fill="#8a8a8a"/><rect x="914.5" y="5.5" width="1.2" height="5.5" fill="#8a8a8a"/></svg>
<svg class="a" style="left:503px;top:542px" width="12" height="12"><path d="M0 0h12v9l-6 3-6-3z" fill="#4a90e2"/></svg>
<div class="a" style="left:508px;top:570px;width:912px;height:12px;background:#4a4a4a;border-radius:6px"></div>
<div class="a" style="left:502px;top:570px;width:13px;height:13px;background:#121212;border:2.5px solid #d8d8d8;border-radius:50%"></div>
<div class="a" style="left:1413px;top:570px;width:13px;height:13px;background:#121212;border:2.5px solid #d8d8d8;border-radius:50%"></div>
<svg class="a" style="left:747px;top:592px" width="18" height="16"><rect x="1" y="1" width="16" height="14" fill="none" stroke="#b4b4b4" stroke-width="1.3"/><rect x="3" y="3" width="12" height="10" fill="none" stroke="#b4b4b4" stroke-width="1.6"/></svg>
<svg class="a" style="left:781px;top:594px" width="12" height="13"><path d="M1 1h10v7l-5 4-5-4z" fill="#b4b4b4"/></svg>
<svg class="a" style="left:817px;top:592px" width="10" height="17"><path d="M7 1H5v6L3 8.5 5 10v6h2" fill="none" stroke="#b4b4b4" stroke-width="1.8"/></svg>
<svg class="a" style="left:845px;top:592px" width="10" height="17"><path d="M3 1h2v6l2 1.5L5 10v6H3" fill="none" stroke="#b4b4b4" stroke-width="1.8"/></svg>
<svg class="a" style="left:891px;top:592px" width="20" height="17"><path d="M3 1v15" stroke="#b4b4b4" stroke-width="1.6"/><path d="M5 8.5l2-2" stroke="#b4b4b4" stroke-width="1.5"/><path d="M8 8.5l5-5v3h5v4h-5v3z" fill="#b4b4b4"/></svg>
<svg class="a" style="left:925px;top:593px" width="16" height="15"><path d="M1 7.5l9-6v12z" fill="#b4b4b4"/><rect x="12" y="1.5" width="2.5" height="12" fill="#b4b4b4"/></svg>
<svg class="a" style="left:956px;top:592px" width="15" height="17"><path d="M2 1.5l12 7-12 7z" fill="#b4b4b4"/></svg>
<svg class="a" style="left:987px;top:593px" width="16" height="15"><rect x="1" y="1.5" width="2.5" height="12" fill="#b4b4b4"/><path d="M15 7.5l-9-6v12z" fill="#b4b4b4"/></svg>
<svg class="a" style="left:1017px;top:592px" width="20" height="17"><path d="M17 1v15" stroke="#b4b4b4" stroke-width="1.6"/><path d="M15 8.5l-2-2" stroke="#b4b4b4" stroke-width="1.5"/><path d="M12 8.5l-5-5v3H2v4h5v3z" fill="#b4b4b4"/></svg>
<svg class="a" style="left:1064px;top:592px" width="22" height="16"><rect x="6" y="1" width="10" height="8" fill="#b4b4b4"/><path d="M9 7l2-3 2 3z" fill="#1e1e1e"/><rect x="1" y="9" width="9" height="6" fill="#b4b4b4"/><rect x="12" y="9" width="9" height="6" fill="#b4b4b4"/></svg>
<svg class="a" style="left:1097px;top:592px" width="22" height="16"><rect x="6" y="1" width="10" height="8" fill="#b4b4b4"/><path d="M9 7l2-3 2 3z" fill="#1e1e1e"/><rect x="1" y="9" width="9" height="6" fill="none" stroke="#b4b4b4" stroke-width="1.4"/><rect x="12" y="9" width="9" height="6" fill="none" stroke="#b4b4b4" stroke-width="1.4"/><path d="M3 10.5l3 1.5-3 1.5zM19 10.5l-3 1.5 3 1.5z" fill="#b4b4b4"/></svg>
<svg class="a" style="left:1131px;top:593px" width="17" height="14"><path d="M1 3h4l1.5-2h4L12 3h4v10H1z" fill="#b4b4b4"/><circle cx="8.5" cy="8" r="2.7" fill="#1e1e1e"/><circle cx="8.5" cy="8" r="1.5" fill="#b4b4b4"/></svg>
<svg class="a" style="left:1160px;top:591px" width="22" height="19"><rect x="1" y="1" width="10" height="11" fill="#b4b4b4"/><rect x="8" y="7" width="12" height="10" fill="#1e1e1e" stroke="#b4b4b4" stroke-width="1.4"/><rect x="8" y="7" width="4" height="5" fill="#b4b4b4"/></svg>
<svg class="a" style="left:1195px;top:592px" width="18" height="17"><path d="M2 1h4M2 1v4M16 1h-4M16 1v4M2 16h4M2 16v-4M16 16h-4M16 16v-4" stroke="#b4b4b4" stroke-width="1.6"/><path d="M5 5l8 8M5 9l4 4M9 5l4 4" stroke="#b4b4b4" stroke-width="1.6"/><path d="M2 1l14 15" stroke="#b4b4b4" stroke-width="1.6"/></svg>
<div class="t" style="left:924px;top:616.5px;font-size:14px;color:#b4b4b4;font-style:italic;font-family:'Liberation Serif',serif">fx</div>
<svg class="a" style="left:953px;top:618px" width="20" height="13"><rect x="1" y="1" width="3" height="3" fill="#b4b4b4"/><rect x="5" y="1" width="3" height="3" fill="#b4b4b4"/><rect x="1" y="6" width="3" height="3" fill="#b4b4b4"/><rect x="5" y="6" width="3" height="3" fill="#b4b4b4"/><rect x="1" y="10" width="7" height="2" fill="#b4b4b4"/><rect x="10" y="1.5" width="9" height="10" fill="none" stroke="#b4b4b4" stroke-width="1.4"/></svg>
<svg class="a" style="left:984px;top:616px" width="21" height="16"><rect x="5" y="1" width="11" height="8" fill="none" stroke="#b4b4b4" stroke-width="1.5"/><path d="M8 4h5l-2.5 3z" fill="#b4b4b4"/><rect x="1" y="9" width="19" height="6" fill="#b4b4b4"/></svg>
<svg class="a" style="left:1399px;top:606px" width="14" height="14"><path d="M7 1v12M1 7h12" stroke="#d0d0d0" stroke-width="2.5"/></svg>
<div class="t f" style="left:1453.5px;top:85.4px;width:59px;font-size:14.5px;color:#d8d8d8;">プロパティ</div>
<svg class="a" style="left:1519px;top:88.5px" width="9" height="9"><rect x="0" y="1" width="8.5" height="1.6" fill="#d0d0d0"/><rect x="0" y="4" width="8.5" height="1.6" fill="#d0d0d0"/><rect x="0" y="7" width="8.5" height="1.6" fill="#d0d0d0"/></svg>
<div class="a" style="left:1453px;top:102px;width:74px;height:2px;background:#d8d8d8;border-radius:1px"></div>
<div class="t f" style="left:1550px;top:85.4px;width:132px;font-size:14.5px;color:#a8a8a8;">エフェクトコントロール</div>
<div class="t f" style="left:1712px;top:85.4px;width:84px;font-size:14.5px;color:#a8a8a8;">Lumetri カラー</div>
<div class="t f" style="left:1832px;top:85.4px;width:62px;font-size:14.5px;color:#a8a8a8;">エッセンシ</div>
<div class="a" style="left:1894px;top:84px;width:3px;height:18px;background:#1e1e1e;border-left:1px solid #333"></div>
<svg class="a" style="left:1901px;top:87px" width="14" height="12"><path d="M2 2l4 4-4 4M7 2l4 4-4 4" fill="none" stroke="#d0d0d0" stroke-width="2"/></svg>
<svg class="a" style="left:1455px;top:121px" width="16" height="16"><path d="M8 1v14" stroke="#c8c8c8" stroke-width="1.5"/><circle cx="8" cy="2.5" r="1.6" fill="#c8c8c8"/><rect x="1" y="5" width="6" height="2" fill="#6ab4ff"/><rect x="9" y="5" width="5" height="2" fill="#6ab4ff"/><rect x="3" y="9" width="4" height="2" fill="#6ab4ff"/><rect x="9" y="9" width="6" height="2" fill="#6ab4ff"/><rect x="1" y="12" width="6" height="2" fill="#3fd18d"/><rect x="9" y="12" width="6" height="2" fill="#3fd18d"/></svg>
<div class="t f" style="left:1479px;top:121.9px;width:140px;font-size:14px;color:#d8d8d8;font-weight:bold">2025-10-24 13-36-56</div>
<svg class="a" style="left:1867px;top:125px" width="16" height="6"><circle cx="2.5" cy="3" r="2" fill="#d0d0d0"/><circle cx="8" cy="3" r="2" fill="#d0d0d0"/><circle cx="13.5" cy="3" r="2" fill="#d0d0d0"/></svg>
<div class="t f" style="left:1512px;top:369.6px;width:329px;font-size:13px;color:#a8a8a8;">タイムラインでクリップを選択してプロパティを表示します。</div>
<div class="a" style="left:1442px;top:607px;width:477px;height:1px;background:#2e2e2e"></div>
<div class="a" style="left:1455px;top:618px;width:181px;height:23px;background:#141414;border-radius:4px;border:1px solid #2a2a2a"></div>
<svg class="a" style="left:1462px;top:621px" width="16" height="16"><path d="M1 14L8 3l4 6" fill="none" stroke="#c8c8c8" stroke-width="1.6"/><rect x="8" y="8" width="7" height="7" fill="#c8c8c8"/><circle cx="6" cy="12" r="3" fill="#141414" stroke="#c8c8c8" stroke-width="1.5"/></svg>
<div class="t f" style="left:1484px;top:622.9px;width:145px;font-size:13.5px;color:#c8c8c8;">新しいグラフィックを作成</div>
<svg class="a" style="left:17px;top:674px" width="16" height="20"><path d="M2 1l13 9-6 1 -7 8z" fill="#b0b0b0"/></svg>
<svg class="a" style="left:13px;top:707px" width="24" height="20"><rect x="1.5" y="3.5" width="11" height="10" fill="none" stroke="#b0b0b0" stroke-width="1.6" stroke-dasharray="2.5 2"/><path d="M9 8.5h10M15 5l4 3.5-4 3.5" fill="none" stroke="#b0b0b0" stroke-width="2"/><path d="M20 17l3-3v3z" fill="#b0b0b0"/></svg>
<svg class="a" style="left:13px;top:737px" width="24" height="20"><path d="M12 1v15" stroke="#b0b0b0" stroke-width="2"/><path d="M1 8.5l5-4.5v9zM23 8.5l-5-4.5v9z" fill="#b0b0b0"/><path d="M5 8.5h14" stroke="#b0b0b0" stroke-width="2"/><path d="M20 18l3-3v3z" fill="#b0b0b0"/></svg>
<div class="a" style="left:4px;top:761px;width:43px;height:37px;border:3px solid #e3191c"></div>
<div class="a" style="left:13px;top:767px;width:24px;height:23px;background:#1473e6;border-radius:3px"></div>
<svg class="a" style="left:14px;top:768px" width="22" height="21"><g transform="rotate(45 11 10.5)"><rect x="3" y="6.5" width="16" height="8" rx="1" fill="#fff"/><path d="M7 10.5h8M7 9v3M15 9v3" stroke="#1473e6" stroke-width="1.4"/><circle cx="11" cy="10.5" r="1.2" fill="#1473e6"/></g></svg>
<svg class="a" style="left:12px;top:802px" width="26" height="18"><path d="M2 1v16M24 1v16" stroke="#b0b0b0" stroke-width="2"/><path d="M5 9h16" stroke="#b0b0b0" stroke-width="2"/><path d="M5 9l4-4v8zM21 9l-4-4v8z" fill="#b0b0b0"/></svg>
<svg class="a" style="left:15px;top:834px" width="20" height="20"><path d="M2 18l2-7 7-8 6 6-8 7z" fill="#b0b0b0"/><path d="M2 18l6-6" stroke="#1e1e1e" stroke-width="1.3"/><circle cx="8" cy="12" r="1.5" fill="#1e1e1e"/><path d="M12 2l6 6" stroke="#b0b0b0" stroke-width="2.5"/></svg>
<svg class="a" style="left:15px;top:866px" width="22" height="20"><rect x="1.5" y="1.5" width="16" height="14" fill="#3a3a3a" stroke="#b0b0b0" stroke-width="1.8"/><path d="M19 19l3-3v3z" fill="#b0b0b0"/></svg>
<svg class="a" style="left:15px;top:897px" width="22" height="22"><path d="M4 12V7a1.3 1.3 0 0 1 2.6 0v4V3.5a1.3 1.3 0 0 1 2.6 0V10V2.5a1.3 1.3 0 0 1 2.6 0V10V4a1.3 1.3 0 0 1 2.6 0v8l2-2.5a1.3 1.3 0 0 1 2 1.6L15 17c-1 2-2 3-5 3s-6-2-6-6z" fill="#b0b0b0"/><path d="M20 21l2-2v2z" fill="#b0b0b0"/></svg>
<svg class="a" style="left:15px;top:929px" width="22" height="21"><path d="M2 2h15v4M2 2v4M9.5 2v16M6 18h7" fill="none" stroke="#b0b0b0" stroke-width="2.5"/><path d="M19 20l3-3v3z" fill="#b0b0b0"/></svg>
<div class="a" style="left:13px;top:958px;width:24px;height:23px;border:1px solid #5a3aa0;border-radius:3px"></div>
<svg class="a" style="left:15px;top:960px" width="20" height="19"><path d="M8 2v15M2 7h12M6 12h12" stroke="#b0b0b0" stroke-width="1.6"/><path d="M1 7l3-2v4zM15 7l-3-2v4zM5 12l3-2v4zM19 12l-3-2v4z" fill="#b0b0b0"/><path d="M14 2l4 3" stroke="#b0b0b0" stroke-width="1.4"/></svg>
<div class="t" style="left:70px;top:661px;font-size:11px;color:#9a9a9a">×</div>
<div class="a" style="left:86px;top:656px;width:124px;height:22px;overflow:hidden"><div class="t f" style="left:0.5px;top:4.1px;width:134px;font-size:14px;color:#e0e0e0;">2025-10-24 13-36-56</div></div>
<svg class="a" style="left:214.5px;top:663.0px" width="9" height="9"><rect x="0" y="1" width="8.5" height="1.6" fill="#d0d0d0"/><rect x="0" y="4" width="8.5" height="1.6" fill="#d0d0d0"/><rect x="0" y="7" width="8.5" height="1.6" fill="#d0d0d0"/></svg>
<div class="t f" style="left:77px;top:686.4px;width:76px;font-size:14px;color:#4f9ef2;font-weight:bold">00:00:01:21</div>
<div class="a" style="left:72px;top:707px;width:23px;height:24px;background:#4a4a4a;border-radius:4px"></div>
<div class="a" style="left:104px;top:707px;width:23px;height:24px;background:#4a4a4a;border-radius:4px"></div>
<div class="a" style="left:136px;top:707px;width:23px;height:24px;background:#4a4a4a;border-radius:4px"></div>
<svg class="a" style="left:75px;top:711px" width="17" height="16"><path d="M8.5 1v14" stroke="#d0d0d0" stroke-width="1.6"/><circle cx="8.5" cy="2" r="1.6" fill="#d0d0d0"/><rect x="1" y="5" width="6" height="2" fill="#d0d0d0"/><rect x="10" y="5" width="5" height="2" fill="#d0d0d0"/><rect x="3" y="9" width="4" height="2" fill="#d0d0d0"/><rect x="10" y="9" width="6" height="2" fill="#d0d0d0"/><rect x="1" y="12.5" width="6" height="2" fill="#d0d0d0"/><rect x="10" y="12.5" width="6" height="2" fill="#d0d0d0"/></svg>
<svg class="a" style="left:108px;top:711px" width="15" height="16"><path d="M2.5 15V7.5a5 5 0 0 1 10 0V15" fill="none" stroke="#d0d0d0" stroke-width="3"/><rect x="1" y="12" width="3" height="3" fill="#4a4a4a"/><rect x="11" y="12" width="3" height="3" fill="#4a4a4a"/></svg>
<svg class="a" style="left:139px;top:711px" width="18" height="16"><rect x="1" y="1" width="5" height="4" fill="#d0d0d0"/><rect x="1" y="7" width="5" height="3" fill="#d0d0d0"/><rect x="1" y="11" width="5" height="4" fill="none" stroke="#d0d0d0" stroke-width="1"/><path d="M7 1h10l-3 4 3 4-5 0 1 6-6-8z" fill="#d0d0d0"/></svg>
<svg class="a" style="left:174px;top:713px" width="11" height="12"><path d="M1 1h9v6l-4.5 4-4.5-4z" fill="#a8a8a8"/></svg>
<svg class="a" style="left:203px;top:711px" width="16" height="16"><path d="M14 15L7 8" stroke="#a8a8a8" stroke-width="3"/><circle cx="5" cy="5" r="4" fill="#a8a8a8"/><path d="M5 5L1.5 1.5" stroke="#1e1e1e" stroke-width="2.5"/></svg>
<div class="a" style="left:235px;top:713px;width:17px;height:11px;border-radius:2px;background:#555"></div><div class="t" style="left:236px;top:714px;font-size:9px;font-weight:bold;color:#1e1e1e;letter-spacing:-0.5px">CC</div>
<svg class="a" style="left:262px;top:709px" width="1562" height="12"><rect x="0.6" y="0" width="1.2" height="11" fill="#8a8a8a"/><rect x="18.4" y="6" width="1.2" height="5" fill="#8a8a8a"/><rect x="36.2" y="6" width="1.2" height="5" fill="#8a8a8a"/><rect x="54.0" y="6" width="1.2" height="5" fill="#8a8a8a"/><rect x="71.8" y="6" width="1.2" height="5" fill="#8a8a8a"/><rect x="89.6" y="6" width="1.2" height="5" fill="#8a8a8a"/><rect x="107.4" y="6" width="1.2" height="5" fill="#8a8a8a"/><rect x="125.2" y="6" width="1.2" height="5" fill="#8a8a8a"/><rect x="143.0" y="6" width="1.2" height="5" fill="#8a8a8a"/><rect x="160.8" y="6" width="1.2" height="5" fill="#8a8a8a"/><rect x="178.6" y="0" width="1.2" height="11" fill="#8a8a8a"/><rect x="196.4" y="6" width="1.2" height="5" fill="#8a8a8a"/><rect x="214.2" y="6" width="1.2" height="5" fill="#8a8a8a"/><rect x="232.0" y="6" width="1.2" height="5" fill="#8a8a8a"/><rect x="249.8" y="6" width="1.2" height="5" fill="#8a8a8a"/><rect x="267.6" y="6" width="1.2" height="5" fill="#8a8a8a"/><rect x="285.4" y="6" width="1.2" height="5" fill="#8a8a8a"/><rect x="303.2" y="6" width="1.2" height="5" fill="#8a8a8a"/><rect x="321.0" y="6" width="1.2" height="5" fill="#8a8a8a"/><rect x="338.8" y="6" width="1.2" height="5" fill="#8a8a8a"/><rect x="356.6" y="0" width="1.2" height="11" fill="#8a8a8a"/><rect x="374.4" y="6" width="1.2" height="5" fill="#8a8a8a"/><rect x="392.2" y="6" width="1.2" height="5" fill="#8a8a8a"/><rect x="410.0" y="6" width="1.2" height="5" fill="#8a8a8a"/><rect x="427.8" y="6" width="1.2" height="5" fill="#8a8a8a"/><rect x="445.6" y="6" width="1.2" height="5" fill="#8a8a8a"/><rect x="463.4" y="6" width="1.2" height="5" fill="#8a8a8a"/><rect x="481.2" y="6" width="1.2" height="5" fill="#8a8a8a"/><rect x="499.0" y="6" width="1.2" height="5" fill="#8a8a8a"/><rect x="516.8" y="6" width="1.2" height="5" fill="#8a8a8a"/><rect x="534.6" y="0" width="1.2" height="11" fill="#8a8a8a"/><rect x="552.4" y="6" width="1.2" height="5" fill="#8a8a8a"/><rect x="570.2" y="6" width="1.2" height="5" fill="#8a8a8a"/><rect x="588.0" y="6" width="1.2" height="5" fill="#8a8a8a"/><rect x="605.8" y="6" width="1.2" height="5" fill="#8a8a8a"/><rect x="623.6" y="6" width="1.2" height="5" fill="#8a8a8a"/><rect x="641.4" y="6" width="1.2" height="5" fill="#8a8a8a"/><rect x="659.2" y="6" width="1.2" height="5" fill="#8a8a8a"/><rect x="677.0" y="6" width="1.2" height="5" fill="#8a8a8a"/><rect x="694.8" y="6" width="1.2" height="5" fill="#8a8a8a"/><rect x="712.6" y="0" width="1.2" height="11" fill="#8a8a8a"/><rect x="730.4" y="6" width="1.2" height="5" fill="#8a8a8a"/><rect x="748.2" y="6" width="1.2" height="5" fill="#8a8a8a"/><rect x="766.0" y="6" width="1.2" height="5" fill="#8a8a8a"/><rect x="783.8" y="6" width="1.2" height="5" fill="#8a8a8a"/><rect x="801.6" y="6" width="1.2" height="5" fill="#8a8a8a"/><rect x="819.4" y="6" width="1.2" height="5" fill="#8a8a8a"/><rect x="837.2" y="6" width="1.2" height="5" fill="#8a8a8a"/><rect x="855.0" y="6" width="1.2" height="5" fill="#8a8a8a"/><rect x="872.8" y="6" width="1.2" height="5" fill="#8a8a8a"/><rect x="890.6" y="0" width="1.2" height="11" fill="#8a8a8a"/><rect x="908.4" y="6" width="1.2" height="5" fill="#8a8a8a"/><rect x="926.2" y="6" width="1.2" height="5" fill="#8a8a8a"/><rect x="944.0" y="6" width="1.2" height="5" fill="#8a8a8a"/><rect x="961.8" y="6" width="1.2" height="5" fill="#8a8a8a"/><rect x="979.6" y="6" width="1.2" height="5" fill="#8a8a8a"/><rect x="997.4" y="6" width="1.2" height="5" fill="#8a8a8a"/><rect x="1015.2" y="6" width="1.2" height="5" fill="#8a8a8a"/><rect x="1033.0" y="6" width="1.2" height="5" fill="#8a8a8a"/><rect x="1050.8" y="6" width="1.2" height="5" fill="#8a8a8a"/><rect x="1068.6" y="0" width="1.2" height="11" fill="#8a8a8a"/><rect x="1086.4" y="6" width="1.2" height="5" fill="#8a8a8a"/><rect x="1104.2" y="6" width="1.2" height="5" fill="#8a8a8a"/><rect x="1122.0" y="6" width="1.2" height="5" fill="#8a8a8a"/><rect x="1139.8" y="6" width="1.2" height="5" fill="#8a8a8a"/><rect x="1157.6" y="6" width="1.2" height="5" fill="#8a8a8a"/><rect x="1175.4" y="6" width="1.2" height="5" fill="#8a8a8a"/><rect x="1193.2" y="6" width="1.2" height="5" fill="#8a8a8a"/><rect x="1211.0" y="6" width="1.2" height="5" fill="#8a8a8a"/><rect x="1228.8" y="6" width="1.2" height="5" fill="#8a8a8a"/><rect x="1246.6" y="0" width="1.2" height="11" fill="#8a8a8a"/><rect x="1264.4" y="6" width="1.2" height="5" fill="#8a8a8a"/><rect x="1282.2" y="6" width="1.2" height="5" fill="#8a8a8a"/><rect x="1300.0" y="6" width="1.2" height="5" fill="#8a8a8a"/><rect x="1317.8" y="6" width="1.2" height="5" fill="#8a8a8a"/><rect x="1335.6" y="6" width="1.2" height="5" fill="#8a8a8a"/><rect x="1353.4" y="6" width="1.2" height="5" fill="#8a8a8a"/><rect x="1371.2" y="6" width="1.2" height="5" fill="#8a8a8a"/><rect x="1389.0" y="6" width="1.2" height="5" fill="#8a8a8a"/><rect x="1406.8" y="6" width="1.2" height="5" fill="#8a8a8a"/><rect x="1424.6" y="0" width="1.2" height="11" fill="#8a8a8a"/><rect x="1442.4" y="6" width="1.2" height="5" fill="#8a8a8a"/><rect x="1460.2" y="6" width="1.2" height="5" fill="#8a8a8a"/><rect x="1478.0" y="6" width="1.2" height="5" fill="#8a8a8a"/><rect x="1495.8" y="6" width="1.2" height="5" fill="#8a8a8a"/><rect x="1513.6" y="6" width="1.2" height="5" fill="#8a8a8a"/><rect x="1531.4" y="6" width="1.2" height="5" fill="#8a8a8a"/><rect x="1549.2" y="6" width="1.2" height="5" fill="#8a8a8a"/></svg>
<div class="t f" style="left:263px;top:696.1px;width:36px;font-size:12px;color:#b0b0b0;">:00:00</div>
<div class="t f" style="left:407.1px;top:696.1px;width:68.5px;font-size:12px;color:#b0b0b0;">00:00:05:00</div>
<div class="t f" style="left:585.1px;top:696.1px;width:68.5px;font-size:12px;color:#b0b0b0;">00:00:10:00</div>
<div class="t f" style="left:763.1px;top:696.1px;width:68.5px;font-size:12px;color:#b0b0b0;">00:00:15:00</div>
<div class="t f" style="left:941.1px;top:696.1px;width:68.5px;font-size:12px;color:#b0b0b0;">00:00:20:00</div>
<div class="t f" style="left:1119.1px;top:696.1px;width:68.5px;font-size:12px;color:#b0b0b0;">00:00:25:00</div>
<div class="t f" style="left:1297.1px;top:696.1px;width:68.5px;font-size:12px;color:#b0b0b0;">00:00:30:00</div>
<div class="t f" style="left:1475.1px;top:696.1px;width:68.5px;font-size:12px;color:#b0b0b0;">00:00:35:00</div>
<div class="t f" style="left:1653.1px;top:696.1px;width:68.5px;font-size:12px;color:#b0b0b0;">00:00:40:00</div>
<div class="a" style="left:501px;top:680px;width:1px;height:40px;background:#8a8a8a"></div>
<div class="a" style="left:263px;top:724px;width:1559px;height:12px;background:#303030"></div>
<div class="a" style="left:263px;top:724px;width:2px;height:12px;background:#4a90e2"></div>
<div class="a" style="left:263px;top:736px;width:1559px;height:2px;background:#e0e030"></div>
<div class="a" style="left:72px;top:738px;width:191px;height:1px;background:#2e2e2e"></div>
<div class="a" style="left:263px;top:739px;width:1px;height:246px;background:#2a2a2a"></div>
<div class="a" style="left:59px;top:777px;width:1763px;height:1px;background:#2a2a2a"></div>
<div class="a" style="left:59px;top:818px;width:1763px;height:1px;background:#2a2a2a"></div>
<div class="a" style="left:59px;top:904px;width:1763px;height:1px;background:#2a2a2a"></div>
<div class="a" style="left:59px;top:945px;width:1763px;height:1px;background:#2a2a2a"></div>
<div class="a" style="left:59px;top:859px;width:1771px;height:5px;background:#303030"></div>
<svg class="a" style="left:102px;top:750px" width="12" height="14"><path d="M3 6V4a3 3 0 0 1 6 0" fill="none" stroke="#a8a8a8" stroke-width="1.8"/><rect x="1" y="6" width="10" height="8" rx="1" fill="#a8a8a8"/><rect x="5" y="8.5" width="2" height="3" fill="#1e1e1e"/></svg>
<div class="t" style="left:120px;top:750.5px;width:23px;text-align:center;font-size:12.5px;color:#9a9a9a">V3</div>
<svg class="a" style="left:149px;top:752px" width="13" height="10"><rect x="0.8" y="0.8" width="8" height="3.4" fill="none" stroke="#a8a8a8" stroke-width="1.4"/><rect x="0.8" y="5.8" width="8" height="3.4" fill="none" stroke="#a8a8a8" stroke-width="1.4"/><path d="M8.8 2.5h3v5h-3" fill="none" stroke="#a8a8a8" stroke-width="1.4"/></svg>
<svg class="a" style="left:171.5px;top:751px" width="14" height="11"><path d="M0.5 5.5Q7 -1.5 13.5 5.5Q7 12.5 0.5 5.5z" fill="#a8a8a8"/><circle cx="7" cy="5.5" r="2.8" fill="#1e1e1e"/><circle cx="7.6" cy="4.9" r="1" fill="#a8a8a8"/></svg>
<svg class="a" style="left:102px;top:790px" width="12" height="14"><path d="M3 6V4a3 3 0 0 1 6 0" fill="none" stroke="#a8a8a8" stroke-width="1.8"/><rect x="1" y="6" width="10" height="8" rx="1" fill="#a8a8a8"/><rect x="5" y="8.5" width="2" height="3" fill="#1e1e1e"/></svg>
<div class="t" style="left:120px;top:790.5px;width:23px;text-align:center;font-size:12.5px;color:#9a9a9a">V2</div>
<svg class="a" style="left:149px;top:792px" width="13" height="10"><rect x="0.8" y="0.8" width="8" height="3.4" fill="none" stroke="#a8a8a8" stroke-width="1.4"/><rect x="0.8" y="5.8" width="8" height="3.4" fill="none" stroke="#a8a8a8" stroke-width="1.4"/><path d="M8.8 2.5h3v5h-3" fill="none" stroke="#a8a8a8" stroke-width="1.4"/></svg>
<svg class="a" style="left:171.5px;top:791px" width="14" height="11"><path d="M0.5 5.5Q7 -1.5 13.5 5.5Q7 12.5 0.5 5.5z" fill="#a8a8a8"/><circle cx="7" cy="5.5" r="2.8" fill="#1e1e1e"/><circle cx="7.6" cy="4.9" r="1" fill="#a8a8a8"/></svg>
<svg class="a" style="left:102px;top:831px" width="12" height="14"><path d="M3 6V4a3 3 0 0 1 6 0" fill="none" stroke="#a8a8a8" stroke-width="1.8"/><rect x="1" y="6" width="10" height="8" rx="1" fill="#a8a8a8"/><rect x="5" y="8.5" width="2" height="3" fill="#1e1e1e"/></svg>
<div class="a" style="left:120px;top:819px;width:23px;height:39px;background:#1565d0;border-radius:4px"></div><div class="t" style="left:120px;top:832.0px;width:23px;text-align:center;font-size:12.5px;color:#e8e8e8">V1</div>
<svg class="a" style="left:149px;top:833px" width="13" height="10"><rect x="0.8" y="0.8" width="8" height="3.4" fill="none" stroke="#a8a8a8" stroke-width="1.4"/><rect x="0.8" y="5.8" width="8" height="3.4" fill="none" stroke="#a8a8a8" stroke-width="1.4"/><path d="M8.8 2.5h3v5h-3" fill="none" stroke="#a8a8a8" stroke-width="1.4"/></svg>
<svg class="a" style="left:171.5px;top:832px" width="14" height="11"><path d="M0.5 5.5Q7 -1.5 13.5 5.5Q7 12.5 0.5 5.5z" fill="#a8a8a8"/><circle cx="7" cy="5.5" r="2.8" fill="#1e1e1e"/><circle cx="7.6" cy="4.9" r="1" fill="#a8a8a8"/></svg>
<svg class="a" style="left:102px;top:876px" width="12" height="14"><path d="M3 6V4a3 3 0 0 1 6 0" fill="none" stroke="#a8a8a8" stroke-width="1.8"/><rect x="1" y="6" width="10" height="8" rx="1" fill="#a8a8a8"/><rect x="5" y="8.5" width="2" height="3" fill="#1e1e1e"/></svg>
<div class="a" style="left:120px;top:864px;width:23px;height:38.5px;background:#1565d0;border-radius:4px"></div><div class="t" style="left:120px;top:876.8px;width:23px;text-align:center;font-size:12.5px;color:#e8e8e8">A1</div>
<svg class="a" style="left:149px;top:878px" width="13" height="10"><rect x="0.8" y="0.8" width="8" height="3.4" fill="none" stroke="#a8a8a8" stroke-width="1.4"/><rect x="0.8" y="5.8" width="8" height="3.4" fill="none" stroke="#a8a8a8" stroke-width="1.4"/><path d="M8.8 2.5h3v5h-3" fill="none" stroke="#a8a8a8" stroke-width="1.4"/></svg>
<div class="a" style="left:167.5px;top:872px;width:24px;height:24px;background:#66d69c;border-radius:4px"></div><div class="t" style="left:167.5px;top:877.5px;width:24px;text-align:center;font-size:12px;color:#1e1e1e">M</div>
<div class="t" style="left:199px;top:877.5px;font-size:12px;color:#9a9a9a">S</div>
<svg class="a" style="left:222px;top:876px" width="10" height="15"><rect x="2.5" y="0.5" width="5" height="9" rx="2.5" fill="#8a8a8a"/><path d="M1 7a4 4 0 0 0 8 0M5 11v2.5M2 14h6" fill="none" stroke="#8a8a8a" stroke-width="1.1"/></svg>
<svg class="a" style="left:102px;top:917px" width="12" height="14"><path d="M3 6V4a3 3 0 0 1 6 0" fill="none" stroke="#a8a8a8" stroke-width="1.8"/><rect x="1" y="6" width="10" height="8" rx="1" fill="#a8a8a8"/><rect x="5" y="8.5" width="2" height="3" fill="#1e1e1e"/></svg>
<div class="a" style="left:120px;top:905.5px;width:23px;height:38.5px;background:#1565d0;border-radius:4px"></div><div class="t" style="left:120px;top:918.2px;width:23px;text-align:center;font-size:12.5px;color:#e8e8e8">A2</div>
<svg class="a" style="left:149px;top:919px" width="13" height="10"><rect x="0.8" y="0.8" width="8" height="3.4" fill="none" stroke="#a8a8a8" stroke-width="1.4"/><rect x="0.8" y="5.8" width="8" height="3.4" fill="none" stroke="#a8a8a8" stroke-width="1.4"/><path d="M8.8 2.5h3v5h-3" fill="none" stroke="#a8a8a8" stroke-width="1.4"/></svg>
<div class="t" style="left:167.5px;top:918.5px;width:24px;text-align:center;font-size:12px;color:#9a9a9a">M</div>
<div class="t" style="left:199px;top:918.5px;font-size:12px;color:#9a9a9a">S</div>
<svg class="a" style="left:222px;top:917px" width="10" height="15"><rect x="2.5" y="0.5" width="5" height="9" rx="2.5" fill="#8a8a8a"/><path d="M1 7a4 4 0 0 0 8 0M5 11v2.5M2 14h6" fill="none" stroke="#8a8a8a" stroke-width="1.1"/></svg>
<svg class="a" style="left:102px;top:958px" width="12" height="14"><path d="M3 6V4a3 3 0 0 1 6 0" fill="none" stroke="#a8a8a8" stroke-width="1.8"/><rect x="1" y="6" width="10" height="8" rx="1" fill="#a8a8a8"/><rect x="5" y="8.5" width="2" height="3" fill="#1e1e1e"/></svg>
<div class="a" style="left:120px;top:946.5px;width:23px;height:38.5px;background:#1565d0;border-radius:4px"></div><div class="t" style="left:120px;top:959.2px;width:23px;text-align:center;font-size:12.5px;color:#e8e8e8">A3</div>
<svg class="a" style="left:149px;top:960px" width="13" height="10"><rect x="0.8" y="0.8" width="8" height="3.4" fill="none" stroke="#a8a8a8" stroke-width="1.4"/><rect x="0.8" y="5.8" width="8" height="3.4" fill="none" stroke="#a8a8a8" stroke-width="1.4"/><path d="M8.8 2.5h3v5h-3" fill="none" stroke="#a8a8a8" stroke-width="1.4"/></svg>
<div class="t" style="left:167.5px;top:959px;width:24px;text-align:center;font-size:12px;color:#9a9a9a">M</div>
<div class="t" style="left:199px;top:959px;font-size:12px;color:#9a9a9a">S</div>
<svg class="a" style="left:222px;top:958px" width="10" height="15"><rect x="2.5" y="0.5" width="5" height="9" rx="2.5" fill="#8a8a8a"/><path d="M1 7a4 4 0 0 0 8 0M5 11v2.5M2 14h6" fill="none" stroke="#8a8a8a" stroke-width="1.1"/></svg>
<div class="a" style="left:72px;top:864px;width:23px;height:39.5px;background:#1565d0;border-radius:4px"></div><div class="t" style="left:72px;top:877.2px;width:23px;text-align:center;font-size:12.5px;color:#e8e8e8">A1</div>
<div class="a" style="left:473px;top:819px;width:2px;height:40px;background:#2c2c2c"></div><div class="a" style="left:473px;top:864px;width:2px;height:40px;background:#2c2c2c"></div>
<div class="a" style="left:263.5px;top:819px;width:209.5px;height:40px;background:#0b5069"></div><div class="a" style="left:263.5px;top:834px;width:209.5px;height:1.5px;background:#c8d2d6"></div><div class="t f" style="left:271.5px;top:820.6px;width:151px;font-size:12px;color:#e4e4e4;">2025-10-24 13-36-56.mp4 [V]</div><div class="t" style="left:454.0px;top:820px;font-size:12px;color:#3d7a8e;font-style:italic;font-family:'Liberation Serif',serif">fx</div>
<div class="a" style="left:475px;top:819px;width:1339px;height:40px;background:#0b5069"></div><div class="a" style="left:475px;top:834px;width:1339px;height:1.5px;background:#c8d2d6"></div><div class="t f" style="left:483px;top:820.6px;width:151px;font-size:12px;color:#e4e4e4;">2025-10-24 13-36-56.mp4 [V]</div><div class="t" style="left:1795px;top:820px;font-size:12px;color:#3d7a8e;font-style:italic;font-family:'Liberation Serif',serif">fx</div>
<div class="a" style="left:263.5px;top:864px;width:209.5px;height:40px;background:#0b5069"></div><div class="a" style="left:263.5px;top:885px;width:209.5px;height:1.5px;background:#c8d2d6"></div><div class="a" style="left:263.5px;top:890px;width:209.5px;height:2px;background:#48b4ee"></div><div class="a" style="left:263.5px;top:902px;width:209.5px;height:2px;background:#48b4ee"></div><div class="t" style="left:454.0px;top:866px;font-size:12px;color:#3d7a8e;font-style:italic;font-family:'Liberation Serif',serif">fx</div>
<div class="a" style="left:475px;top:864px;width:1339px;height:40px;background:#0b5069"></div><div class="a" style="left:475px;top:885px;width:1339px;height:1.5px;background:#c8d2d6"></div><div class="a" style="left:475px;top:890px;width:1339px;height:2px;background:#48b4ee"></div><div class="a" style="left:475px;top:902px;width:1339px;height:2px;background:#48b4ee"></div><div class="t" style="left:1795px;top:866px;font-size:12px;color:#3d7a8e;font-style:italic;font-family:'Liberation Serif',serif">fx</div>
<svg class="a" style="left:475px;top:864px" width="1339" height="40"><rect x="237" y="24.1" width="1.5" height="1.9" fill="#62c4f5"/><rect x="237" y="36.1" width="1.5" height="1.9" fill="#62c4f5"/><rect x="240" y="24.0" width="1.5" height="2.0" fill="#62c4f5"/><rect x="240" y="36.0" width="1.5" height="2.0" fill="#62c4f5"/><rect x="246" y="25.5" width="1.5" height="0.5" fill="#62c4f5"/><rect x="246" y="37.5" width="1.5" height="0.5" fill="#62c4f5"/><rect x="252" y="24.9" width="1.5" height="1.1" fill="#62c4f5"/><rect x="252" y="36.9" width="1.5" height="1.1" fill="#62c4f5"/><rect x="258" y="23.4" width="1.5" height="2.6" fill="#62c4f5"/><rect x="258" y="35.4" width="1.5" height="2.6" fill="#62c4f5"/><rect x="261" y="23.9" width="1.5" height="2.1" fill="#62c4f5"/><rect x="261" y="35.9" width="1.5" height="2.1" fill="#62c4f5"/><rect x="264" y="23.9" width="1.5" height="2.1" fill="#62c4f5"/><rect x="264" y="35.9" width="1.5" height="2.1" fill="#62c4f5"/><rect x="270" y="23.6" width="1.5" height="2.4" fill="#62c4f5"/><rect x="270" y="35.6" width="1.5" height="2.4" fill="#62c4f5"/><rect x="276" y="23.6" width="1.5" height="2.4" fill="#62c4f5"/><rect x="276" y="35.6" width="1.5" height="2.4" fill="#62c4f5"/><rect x="282" y="25.4" width="1.5" height="0.6" fill="#62c4f5"/><rect x="282" y="37.4" width="1.5" height="0.6" fill="#62c4f5"/><rect x="288" y="23.7" width="1.5" height="2.3" fill="#62c4f5"/><rect x="288" y="35.7" width="1.5" height="2.3" fill="#62c4f5"/><rect x="300" y="23.5" width="1.5" height="2.5" fill="#62c4f5"/><rect x="300" y="35.5" width="1.5" height="2.5" fill="#62c4f5"/><rect x="303" y="23.2" width="1.5" height="2.8" fill="#62c4f5"/><rect x="303" y="35.2" width="1.5" height="2.8" fill="#62c4f5"/><rect x="309" y="25.2" width="1.5" height="0.8" fill="#62c4f5"/><rect x="309" y="37.2" width="1.5" height="0.8" fill="#62c4f5"/><rect x="312" y="23.1" width="1.5" height="2.9" fill="#62c4f5"/><rect x="312" y="35.1" width="1.5" height="2.9" fill="#62c4f5"/><rect x="315" y="23.9" width="1.5" height="2.1" fill="#62c4f5"/><rect x="315" y="35.9" width="1.5" height="2.1" fill="#62c4f5"/><rect x="318" y="24.2" width="1.5" height="1.8" fill="#62c4f5"/><rect x="318" y="36.2" width="1.5" height="1.8" fill="#62c4f5"/><rect x="321" y="24.6" width="1.5" height="1.4" fill="#62c4f5"/><rect x="321" y="36.6" width="1.5" height="1.4" fill="#62c4f5"/><rect x="348" y="23.3" width="1.5" height="2.7" fill="#62c4f5"/><rect x="348" y="35.3" width="1.5" height="2.7" fill="#62c4f5"/><rect x="363" y="23.4" width="1.5" height="2.6" fill="#62c4f5"/><rect x="363" y="35.4" width="1.5" height="2.6" fill="#62c4f5"/><rect x="369" y="25.3" width="1.5" height="0.7" fill="#62c4f5"/><rect x="369" y="37.3" width="1.5" height="0.7" fill="#62c4f5"/><rect x="378" y="23.5" width="1.5" height="2.5" fill="#62c4f5"/><rect x="378" y="35.5" width="1.5" height="2.5" fill="#62c4f5"/><rect x="381" y="25.1" width="1.5" height="0.9" fill="#62c4f5"/><rect x="381" y="37.1" width="1.5" height="0.9" fill="#62c4f5"/><rect x="384" y="23.6" width="1.5" height="2.4" fill="#62c4f5"/><rect x="384" y="35.6" width="1.5" height="2.4" fill="#62c4f5"/><rect x="390" y="24.0" width="1.5" height="2.0" fill="#62c4f5"/><rect x="390" y="36.0" width="1.5" height="2.0" fill="#62c4f5"/><rect x="393" y="23.7" width="1.5" height="2.3" fill="#62c4f5"/><rect x="393" y="35.7" width="1.5" height="2.3" fill="#62c4f5"/><rect x="396" y="23.3" width="1.5" height="2.7" fill="#62c4f5"/><rect x="396" y="35.3" width="1.5" height="2.7" fill="#62c4f5"/><rect x="402" y="23.0" width="1.5" height="3.0" fill="#62c4f5"/><rect x="402" y="35.0" width="1.5" height="3.0" fill="#62c4f5"/><rect x="405" y="25.3" width="1.5" height="0.7" fill="#62c4f5"/><rect x="405" y="37.3" width="1.5" height="0.7" fill="#62c4f5"/><rect x="411" y="25.0" width="1.5" height="1.0" fill="#62c4f5"/><rect x="411" y="37.0" width="1.5" height="1.0" fill="#62c4f5"/><rect x="414" y="24.0" width="1.5" height="2.0" fill="#62c4f5"/><rect x="414" y="36.0" width="1.5" height="2.0" fill="#62c4f5"/><rect x="417" y="25.4" width="1.5" height="0.6" fill="#62c4f5"/><rect x="417" y="37.4" width="1.5" height="0.6" fill="#62c4f5"/><rect x="423" y="23.1" width="1.5" height="2.9" fill="#62c4f5"/><rect x="423" y="35.1" width="1.5" height="2.9" fill="#62c4f5"/><rect x="429" y="24.3" width="1.5" height="1.7" fill="#62c4f5"/><rect x="429" y="36.3" width="1.5" height="1.7" fill="#62c4f5"/><rect x="432" y="23.9" width="1.5" height="2.1" fill="#62c4f5"/><rect x="432" y="35.9" width="1.5" height="2.1" fill="#62c4f5"/><rect x="447" y="24.4" width="1.5" height="1.6" fill="#62c4f5"/><rect x="447" y="36.4" width="1.5" height="1.6" fill="#62c4f5"/><rect x="453" y="24.7" width="1.5" height="1.3" fill="#62c4f5"/><rect x="453" y="36.7" width="1.5" height="1.3" fill="#62c4f5"/><rect x="459" y="24.1" width="1.5" height="1.9" fill="#62c4f5"/><rect x="459" y="36.1" width="1.5" height="1.9" fill="#62c4f5"/><rect x="462" y="24.5" width="1.5" height="1.5" fill="#62c4f5"/><rect x="462" y="36.5" width="1.5" height="1.5" fill="#62c4f5"/><rect x="468" y="24.0" width="1.5" height="2.0" fill="#62c4f5"/><rect x="468" y="36.0" width="1.5" height="2.0" fill="#62c4f5"/><rect x="474" y="23.9" width="1.5" height="2.1" fill="#62c4f5"/><rect x="474" y="35.9" width="1.5" height="2.1" fill="#62c4f5"/><rect x="477" y="23.8" width="1.5" height="2.2" fill="#62c4f5"/><rect x="477" y="35.8" width="1.5" height="2.2" fill="#62c4f5"/><rect x="480" y="23.7" width="1.5" height="2.3" fill="#62c4f5"/><rect x="480" y="35.7" width="1.5" height="2.3" fill="#62c4f5"/><rect x="486" y="25.3" width="1.5" height="0.7" fill="#62c4f5"/><rect x="486" y="37.3" width="1.5" height="0.7" fill="#62c4f5"/><rect x="495" y="24.4" width="1.5" height="1.6" fill="#62c4f5"/><rect x="495" y="36.4" width="1.5" height="1.6" fill="#62c4f5"/><rect x="501" y="24.6" width="1.5" height="1.4" fill="#62c4f5"/><rect x="501" y="36.6" width="1.5" height="1.4" fill="#62c4f5"/><rect x="504" y="24.6" width="1.5" height="1.4" fill="#62c4f5"/><rect x="504" y="36.6" width="1.5" height="1.4" fill="#62c4f5"/><rect x="510" y="24.6" width="1.5" height="1.4" fill="#62c4f5"/><rect x="510" y="36.6" width="1.5" height="1.4" fill="#62c4f5"/><rect x="516" y="24.1" width="1.5" height="1.9" fill="#62c4f5"/><rect x="516" y="36.1" width="1.5" height="1.9" fill="#62c4f5"/><rect x="522" y="24.9" width="1.5" height="1.1" fill="#62c4f5"/><rect x="522" y="36.9" width="1.5" height="1.1" fill="#62c4f5"/><rect x="528" y="25.0" width="1.5" height="1.0" fill="#62c4f5"/><rect x="528" y="37.0" width="1.5" height="1.0" fill="#62c4f5"/><rect x="531" y="23.8" width="1.5" height="2.2" fill="#62c4f5"/><rect x="531" y="35.8" width="1.5" height="2.2" fill="#62c4f5"/><rect x="534" y="24.7" width="1.5" height="1.3" fill="#62c4f5"/><rect x="534" y="36.7" width="1.5" height="1.3" fill="#62c4f5"/><rect x="537" y="23.4" width="1.5" height="2.6" fill="#62c4f5"/><rect x="537" y="35.4" width="1.5" height="2.6" fill="#62c4f5"/><rect x="540" y="23.4" width="1.5" height="2.6" fill="#62c4f5"/><rect x="540" y="35.4" width="1.5" height="2.6" fill="#62c4f5"/><rect x="543" y="24.7" width="1.5" height="1.3" fill="#62c4f5"/><rect x="543" y="36.7" width="1.5" height="1.3" fill="#62c4f5"/><rect x="552" y="24.9" width="1.5" height="1.1" fill="#62c4f5"/><rect x="552" y="36.9" width="1.5" height="1.1" fill="#62c4f5"/><rect x="555" y="24.2" width="1.5" height="1.8" fill="#62c4f5"/><rect x="555" y="36.2" width="1.5" height="1.8" fill="#62c4f5"/><rect x="558" y="23.5" width="1.5" height="2.5" fill="#62c4f5"/><rect x="558" y="35.5" width="1.5" height="2.5" fill="#62c4f5"/><rect x="564" y="24.8" width="1.5" height="1.2" fill="#62c4f5"/><rect x="564" y="36.8" width="1.5" height="1.2" fill="#62c4f5"/><rect x="576" y="25.2" width="1.5" height="0.8" fill="#62c4f5"/><rect x="576" y="37.2" width="1.5" height="0.8" fill="#62c4f5"/><rect x="579" y="23.5" width="1.5" height="2.5" fill="#62c4f5"/><rect x="579" y="35.5" width="1.5" height="2.5" fill="#62c4f5"/><rect x="582" y="24.6" width="1.5" height="1.4" fill="#62c4f5"/><rect x="582" y="36.6" width="1.5" height="1.4" fill="#62c4f5"/><rect x="585" y="24.5" width="1.5" height="1.5" fill="#62c4f5"/><rect x="585" y="36.5" width="1.5" height="1.5" fill="#62c4f5"/><rect x="588" y="23.2" width="1.5" height="2.8" fill="#62c4f5"/><rect x="588" y="35.2" width="1.5" height="2.8" fill="#62c4f5"/><rect x="591" y="25.5" width="1.5" height="0.5" fill="#62c4f5"/><rect x="591" y="37.5" width="1.5" height="0.5" fill="#62c4f5"/><rect x="603" y="23.1" width="1.5" height="2.9" fill="#62c4f5"/><rect x="603" y="35.1" width="1.5" height="2.9" fill="#62c4f5"/><rect x="609" y="23.6" width="1.5" height="2.4" fill="#62c4f5"/><rect x="609" y="35.6" width="1.5" height="2.4" fill="#62c4f5"/><rect x="618" y="24.8" width="1.5" height="1.2" fill="#62c4f5"/><rect x="618" y="36.8" width="1.5" height="1.2" fill="#62c4f5"/><rect x="621" y="24.9" width="1.5" height="1.1" fill="#62c4f5"/><rect x="621" y="36.9" width="1.5" height="1.1" fill="#62c4f5"/><rect x="624" y="24.0" width="1.5" height="2.0" fill="#62c4f5"/><rect x="624" y="36.0" width="1.5" height="2.0" fill="#62c4f5"/><rect x="627" y="23.5" width="1.5" height="2.5" fill="#62c4f5"/><rect x="627" y="35.5" width="1.5" height="2.5" fill="#62c4f5"/><rect x="630" y="23.2" width="1.5" height="2.8" fill="#62c4f5"/><rect x="630" y="35.2" width="1.5" height="2.8" fill="#62c4f5"/><rect x="648" y="23.6" width="1.5" height="2.4" fill="#62c4f5"/><rect x="648" y="35.6" width="1.5" height="2.4" fill="#62c4f5"/><rect x="651" y="24.8" width="1.5" height="1.2" fill="#62c4f5"/><rect x="651" y="36.8" width="1.5" height="1.2" fill="#62c4f5"/><rect x="657" y="24.5" width="1.5" height="1.5" fill="#62c4f5"/><rect x="657" y="36.5" width="1.5" height="1.5" fill="#62c4f5"/><rect x="666" y="24.9" width="1.5" height="1.1" fill="#62c4f5"/><rect x="666" y="36.9" width="1.5" height="1.1" fill="#62c4f5"/><rect x="672" y="23.5" width="1.5" height="2.5" fill="#62c4f5"/><rect x="672" y="35.5" width="1.5" height="2.5" fill="#62c4f5"/><rect x="675" y="25.0" width="1.5" height="1.0" fill="#62c4f5"/><rect x="675" y="37.0" width="1.5" height="1.0" fill="#62c4f5"/><rect x="678" y="23.5" width="1.5" height="2.5" fill="#62c4f5"/><rect x="678" y="35.5" width="1.5" height="2.5" fill="#62c4f5"/><rect x="681" y="23.5" width="1.5" height="2.5" fill="#62c4f5"/><rect x="681" y="35.5" width="1.5" height="2.5" fill="#62c4f5"/><rect x="693" y="23.9" width="1.5" height="2.1" fill="#62c4f5"/><rect x="693" y="35.9" width="1.5" height="2.1" fill="#62c4f5"/><rect x="699" y="24.8" width="1.5" height="1.2" fill="#62c4f5"/><rect x="699" y="36.8" width="1.5" height="1.2" fill="#62c4f5"/><rect x="702" y="24.2" width="1.5" height="1.8" fill="#62c4f5"/><rect x="702" y="36.2" width="1.5" height="1.8" fill="#62c4f5"/><rect x="705" y="24.3" width="1.5" height="1.7" fill="#62c4f5"/><rect x="705" y="36.3" width="1.5" height="1.7" fill="#62c4f5"/><rect x="711" y="25.4" width="1.5" height="0.6" fill="#62c4f5"/><rect x="711" y="37.4" width="1.5" height="0.6" fill="#62c4f5"/><rect x="714" y="25.2" width="1.5" height="0.8" fill="#62c4f5"/><rect x="714" y="37.2" width="1.5" height="0.8" fill="#62c4f5"/><rect x="717" y="23.1" width="1.5" height="2.9" fill="#62c4f5"/><rect x="717" y="35.1" width="1.5" height="2.9" fill="#62c4f5"/><rect x="723" y="24.2" width="1.5" height="1.8" fill="#62c4f5"/><rect x="723" y="36.2" width="1.5" height="1.8" fill="#62c4f5"/><rect x="726" y="24.7" width="1.5" height="1.3" fill="#62c4f5"/><rect x="726" y="36.7" width="1.5" height="1.3" fill="#62c4f5"/><rect x="729" y="23.9" width="1.5" height="2.1" fill="#62c4f5"/><rect x="729" y="35.9" width="1.5" height="2.1" fill="#62c4f5"/><rect x="735" y="25.0" width="1.5" height="1.0" fill="#62c4f5"/><rect x="735" y="37.0" width="1.5" height="1.0" fill="#62c4f5"/><rect x="738" y="25.2" width="1.5" height="0.8" fill="#62c4f5"/><rect x="738" y="37.2" width="1.5" height="0.8" fill="#62c4f5"/><rect x="747" y="25.3" width="1.5" height="0.7" fill="#62c4f5"/><rect x="747" y="37.3" width="1.5" height="0.7" fill="#62c4f5"/><rect x="750" y="24.6" width="1.5" height="1.4" fill="#62c4f5"/><rect x="750" y="36.6" width="1.5" height="1.4" fill="#62c4f5"/><rect x="759" y="23.5" width="1.5" height="2.5" fill="#62c4f5"/><rect x="759" y="35.5" width="1.5" height="2.5" fill="#62c4f5"/><rect x="765" y="24.6" width="1.5" height="1.4" fill="#62c4f5"/><rect x="765" y="36.6" width="1.5" height="1.4" fill="#62c4f5"/><rect x="768" y="23.7" width="1.5" height="2.3" fill="#62c4f5"/><rect x="768" y="35.7" width="1.5" height="2.3" fill="#62c4f5"/><rect x="771" y="23.8" width="1.5" height="2.2" fill="#62c4f5"/><rect x="771" y="35.8" width="1.5" height="2.2" fill="#62c4f5"/><rect x="774" y="24.9" width="1.5" height="1.1" fill="#62c4f5"/><rect x="774" y="36.9" width="1.5" height="1.1" fill="#62c4f5"/><rect x="777" y="23.8" width="1.5" height="2.2" fill="#62c4f5"/><rect x="777" y="35.8" width="1.5" height="2.2" fill="#62c4f5"/><rect x="780" y="24.4" width="1.5" height="1.6" fill="#62c4f5"/><rect x="780" y="36.4" width="1.5" height="1.6" fill="#62c4f5"/><rect x="783" y="23.3" width="1.5" height="2.7" fill="#62c4f5"/><rect x="783" y="35.3" width="1.5" height="2.7" fill="#62c4f5"/><rect x="789" y="23.3" width="1.5" height="2.7" fill="#62c4f5"/><rect x="789" y="35.3" width="1.5" height="2.7" fill="#62c4f5"/><rect x="795" y="24.3" width="1.5" height="1.7" fill="#62c4f5"/><rect x="795" y="36.3" width="1.5" height="1.7" fill="#62c4f5"/><rect x="798" y="23.5" width="1.5" height="2.5" fill="#62c4f5"/><rect x="798" y="35.5" width="1.5" height="2.5" fill="#62c4f5"/><rect x="819" y="24.0" width="1.5" height="2.0" fill="#62c4f5"/><rect x="819" y="36.0" width="1.5" height="2.0" fill="#62c4f5"/><rect x="822" y="25.1" width="1.5" height="0.9" fill="#62c4f5"/><rect x="822" y="37.1" width="1.5" height="0.9" fill="#62c4f5"/><rect x="828" y="25.3" width="1.5" height="0.7" fill="#62c4f5"/><rect x="828" y="37.3" width="1.5" height="0.7" fill="#62c4f5"/><rect x="831" y="23.3" width="1.5" height="2.7" fill="#62c4f5"/><rect x="831" y="35.3" width="1.5" height="2.7" fill="#62c4f5"/><rect x="834" y="25.4" width="1.5" height="0.6" fill="#62c4f5"/><rect x="834" y="37.4" width="1.5" height="0.6" fill="#62c4f5"/><rect x="840" y="23.4" width="1.5" height="2.6" fill="#62c4f5"/><rect x="840" y="35.4" width="1.5" height="2.6" fill="#62c4f5"/><rect x="858" y="23.6" width="1.5" height="2.4" fill="#62c4f5"/><rect x="858" y="35.6" width="1.5" height="2.4" fill="#62c4f5"/><rect x="861" y="23.7" width="1.5" height="2.3" fill="#62c4f5"/><rect x="861" y="35.7" width="1.5" height="2.3" fill="#62c4f5"/><rect x="864" y="23.6" width="1.5" height="2.4" fill="#62c4f5"/><rect x="864" y="35.6" width="1.5" height="2.4" fill="#62c4f5"/><rect x="870" y="24.7" width="1.5" height="1.3" fill="#62c4f5"/><rect x="870" y="36.7" width="1.5" height="1.3" fill="#62c4f5"/><rect x="879" y="25.1" width="1.5" height="0.9" fill="#62c4f5"/><rect x="879" y="37.1" width="1.5" height="0.9" fill="#62c4f5"/><rect x="882" y="24.0" width="1.5" height="2.0" fill="#62c4f5"/><rect x="882" y="36.0" width="1.5" height="2.0" fill="#62c4f5"/><rect x="888" y="24.6" width="1.5" height="1.4" fill="#62c4f5"/><rect x="888" y="36.6" width="1.5" height="1.4" fill="#62c4f5"/><rect x="891" y="24.6" width="1.5" height="1.4" fill="#62c4f5"/><rect x="891" y="36.6" width="1.5" height="1.4" fill="#62c4f5"/><rect x="894" y="25.3" width="1.5" height="0.7" fill="#62c4f5"/><rect x="894" y="37.3" width="1.5" height="0.7" fill="#62c4f5"/><rect x="897" y="23.1" width="1.5" height="2.9" fill="#62c4f5"/><rect x="897" y="35.1" width="1.5" height="2.9" fill="#62c4f5"/><rect x="900" y="23.6" width="1.5" height="2.4" fill="#62c4f5"/><rect x="900" y="35.6" width="1.5" height="2.4" fill="#62c4f5"/><rect x="903" y="23.8" width="1.5" height="2.2" fill="#62c4f5"/><rect x="903" y="35.8" width="1.5" height="2.2" fill="#62c4f5"/><rect x="912" y="24.3" width="1.5" height="1.7" fill="#62c4f5"/><rect x="912" y="36.3" width="1.5" height="1.7" fill="#62c4f5"/><rect x="921" y="25.3" width="1.5" height="0.7" fill="#62c4f5"/><rect x="921" y="37.3" width="1.5" height="0.7" fill="#62c4f5"/><rect x="930" y="24.4" width="1.5" height="1.6" fill="#62c4f5"/><rect x="930" y="36.4" width="1.5" height="1.6" fill="#62c4f5"/><rect x="936" y="24.8" width="1.5" height="1.2" fill="#62c4f5"/><rect x="936" y="36.8" width="1.5" height="1.2" fill="#62c4f5"/><rect x="939" y="24.0" width="1.5" height="2.0" fill="#62c4f5"/><rect x="939" y="36.0" width="1.5" height="2.0" fill="#62c4f5"/><rect x="942" y="24.9" width="1.5" height="1.1" fill="#62c4f5"/><rect x="942" y="36.9" width="1.5" height="1.1" fill="#62c4f5"/><rect x="951" y="23.7" width="1.5" height="2.3" fill="#62c4f5"/><rect x="951" y="35.7" width="1.5" height="2.3" fill="#62c4f5"/><rect x="954" y="23.4" width="1.5" height="2.6" fill="#62c4f5"/><rect x="954" y="35.4" width="1.5" height="2.6" fill="#62c4f5"/><rect x="960" y="25.0" width="1.5" height="1.0" fill="#62c4f5"/><rect x="960" y="37.0" width="1.5" height="1.0" fill="#62c4f5"/><rect x="963" y="24.3" width="1.5" height="1.7" fill="#62c4f5"/><rect x="963" y="36.3" width="1.5" height="1.7" fill="#62c4f5"/><rect x="966" y="25.1" width="1.5" height="0.9" fill="#62c4f5"/><rect x="966" y="37.1" width="1.5" height="0.9" fill="#62c4f5"/><rect x="969" y="24.7" width="1.5" height="1.3" fill="#62c4f5"/><rect x="969" y="36.7" width="1.5" height="1.3" fill="#62c4f5"/><rect x="975" y="23.0" width="1.5" height="3.0" fill="#62c4f5"/><rect x="975" y="35.0" width="1.5" height="3.0" fill="#62c4f5"/><rect x="978" y="24.0" width="1.5" height="2.0" fill="#62c4f5"/><rect x="978" y="36.0" width="1.5" height="2.0" fill="#62c4f5"/><rect x="981" y="23.4" width="1.5" height="2.6" fill="#62c4f5"/><rect x="981" y="35.4" width="1.5" height="2.6" fill="#62c4f5"/><rect x="990" y="23.7" width="1.5" height="2.3" fill="#62c4f5"/><rect x="990" y="35.7" width="1.5" height="2.3" fill="#62c4f5"/><rect x="996" y="23.7" width="1.5" height="2.3" fill="#62c4f5"/><rect x="996" y="35.7" width="1.5" height="2.3" fill="#62c4f5"/><rect x="1002" y="24.9" width="1.5" height="1.1" fill="#62c4f5"/><rect x="1002" y="36.9" width="1.5" height="1.1" fill="#62c4f5"/><rect x="1005" y="23.7" width="1.5" height="2.3" fill="#62c4f5"/><rect x="1005" y="35.7" width="1.5" height="2.3" fill="#62c4f5"/><rect x="1017" y="25.0" width="1.5" height="1.0" fill="#62c4f5"/><rect x="1017" y="37.0" width="1.5" height="1.0" fill="#62c4f5"/><rect x="1020" y="25.0" width="1.5" height="1.0" fill="#62c4f5"/><rect x="1020" y="37.0" width="1.5" height="1.0" fill="#62c4f5"/><rect x="1032" y="23.3" width="1.5" height="2.7" fill="#62c4f5"/><rect x="1032" y="35.3" width="1.5" height="2.7" fill="#62c4f5"/><rect x="1035" y="24.4" width="1.5" height="1.6" fill="#62c4f5"/><rect x="1035" y="36.4" width="1.5" height="1.6" fill="#62c4f5"/><rect x="1041" y="25.3" width="1.5" height="0.7" fill="#62c4f5"/><rect x="1041" y="37.3" width="1.5" height="0.7" fill="#62c4f5"/><rect x="1047" y="24.6" width="1.5" height="1.4" fill="#62c4f5"/><rect x="1047" y="36.6" width="1.5" height="1.4" fill="#62c4f5"/><rect x="1056" y="24.7" width="1.5" height="1.3" fill="#62c4f5"/><rect x="1056" y="36.7" width="1.5" height="1.3" fill="#62c4f5"/><rect x="1059" y="24.3" width="1.5" height="1.7" fill="#62c4f5"/><rect x="1059" y="36.3" width="1.5" height="1.7" fill="#62c4f5"/><rect x="1062" y="24.0" width="1.5" height="2.0" fill="#62c4f5"/><rect x="1062" y="36.0" width="1.5" height="2.0" fill="#62c4f5"/><rect x="1068" y="24.1" width="1.5" height="1.9" fill="#62c4f5"/><rect x="1068" y="36.1" width="1.5" height="1.9" fill="#62c4f5"/><rect x="1071" y="24.8" width="1.5" height="1.2" fill="#62c4f5"/><rect x="1071" y="36.8" width="1.5" height="1.2" fill="#62c4f5"/><rect x="1077" y="23.3" width="1.5" height="2.7" fill="#62c4f5"/><rect x="1077" y="35.3" width="1.5" height="2.7" fill="#62c4f5"/><rect x="1083" y="23.1" width="1.5" height="2.9" fill="#62c4f5"/><rect x="1083" y="35.1" width="1.5" height="2.9" fill="#62c4f5"/><rect x="1086" y="23.6" width="1.5" height="2.4" fill="#62c4f5"/><rect x="1086" y="35.6" width="1.5" height="2.4" fill="#62c4f5"/><rect x="1092" y="23.8" width="1.5" height="2.2" fill="#62c4f5"/><rect x="1092" y="35.8" width="1.5" height="2.2" fill="#62c4f5"/><rect x="1101" y="23.6" width="1.5" height="2.4" fill="#62c4f5"/><rect x="1101" y="35.6" width="1.5" height="2.4" fill="#62c4f5"/><rect x="1110" y="25.2" width="1.5" height="0.8" fill="#62c4f5"/><rect x="1110" y="37.2" width="1.5" height="0.8" fill="#62c4f5"/><rect x="1113" y="24.6" width="1.5" height="1.4" fill="#62c4f5"/><rect x="1113" y="36.6" width="1.5" height="1.4" fill="#62c4f5"/><rect x="1125" y="23.9" width="1.5" height="2.1" fill="#62c4f5"/><rect x="1125" y="35.9" width="1.5" height="2.1" fill="#62c4f5"/><rect x="1131" y="23.3" width="1.5" height="2.7" fill="#62c4f5"/><rect x="1131" y="35.3" width="1.5" height="2.7" fill="#62c4f5"/><rect x="1137" y="23.2" width="1.5" height="2.8" fill="#62c4f5"/><rect x="1137" y="35.2" width="1.5" height="2.8" fill="#62c4f5"/><rect x="1140" y="24.7" width="1.5" height="1.3" fill="#62c4f5"/><rect x="1140" y="36.7" width="1.5" height="1.3" fill="#62c4f5"/><rect x="1155" y="24.7" width="1.5" height="1.3" fill="#62c4f5"/><rect x="1155" y="36.7" width="1.5" height="1.3" fill="#62c4f5"/><rect x="1158" y="25.3" width="1.5" height="0.7" fill="#62c4f5"/><rect x="1158" y="37.3" width="1.5" height="0.7" fill="#62c4f5"/><rect x="1167" y="23.7" width="1.5" height="2.3" fill="#62c4f5"/><rect x="1167" y="35.7" width="1.5" height="2.3" fill="#62c4f5"/><rect x="1170" y="24.8" width="1.5" height="1.2" fill="#62c4f5"/><rect x="1170" y="36.8" width="1.5" height="1.2" fill="#62c4f5"/><rect x="1173" y="23.3" width="1.5" height="2.7" fill="#62c4f5"/><rect x="1173" y="35.3" width="1.5" height="2.7" fill="#62c4f5"/><rect x="1176" y="24.2" width="1.5" height="1.8" fill="#62c4f5"/><rect x="1176" y="36.2" width="1.5" height="1.8" fill="#62c4f5"/><rect x="1179" y="23.6" width="1.5" height="2.4" fill="#62c4f5"/><rect x="1179" y="35.6" width="1.5" height="2.4" fill="#62c4f5"/><rect x="1182" y="24.7" width="1.5" height="1.3" fill="#62c4f5"/><rect x="1182" y="36.7" width="1.5" height="1.3" fill="#62c4f5"/><rect x="1185" y="24.1" width="1.5" height="1.9" fill="#62c4f5"/><rect x="1185" y="36.1" width="1.5" height="1.9" fill="#62c4f5"/><rect x="1191" y="23.4" width="1.5" height="2.6" fill="#62c4f5"/><rect x="1191" y="35.4" width="1.5" height="2.6" fill="#62c4f5"/><rect x="1194" y="24.8" width="1.5" height="1.2" fill="#62c4f5"/><rect x="1194" y="36.8" width="1.5" height="1.2" fill="#62c4f5"/><rect x="1197" y="25.2" width="1.5" height="0.8" fill="#62c4f5"/><rect x="1197" y="37.2" width="1.5" height="0.8" fill="#62c4f5"/><rect x="1206" y="25.0" width="1.5" height="1.0" fill="#62c4f5"/><rect x="1206" y="37.0" width="1.5" height="1.0" fill="#62c4f5"/><rect x="1209" y="23.6" width="1.5" height="2.4" fill="#62c4f5"/><rect x="1209" y="35.6" width="1.5" height="2.4" fill="#62c4f5"/><rect x="1221" y="24.5" width="1.5" height="1.5" fill="#62c4f5"/><rect x="1221" y="36.5" width="1.5" height="1.5" fill="#62c4f5"/><rect x="1224" y="24.2" width="1.5" height="1.8" fill="#62c4f5"/><rect x="1224" y="36.2" width="1.5" height="1.8" fill="#62c4f5"/><rect x="1230" y="24.9" width="1.5" height="1.1" fill="#62c4f5"/><rect x="1230" y="36.9" width="1.5" height="1.1" fill="#62c4f5"/><rect x="1236" y="23.5" width="1.5" height="2.5" fill="#62c4f5"/><rect x="1236" y="35.5" width="1.5" height="2.5" fill="#62c4f5"/><rect x="1245" y="24.1" width="1.5" height="1.9" fill="#62c4f5"/><rect x="1245" y="36.1" width="1.5" height="1.9" fill="#62c4f5"/><rect x="1260" y="23.3" width="1.5" height="2.7" fill="#62c4f5"/><rect x="1260" y="35.3" width="1.5" height="2.7" fill="#62c4f5"/><rect x="1263" y="24.0" width="1.5" height="2.0" fill="#62c4f5"/><rect x="1263" y="36.0" width="1.5" height="2.0" fill="#62c4f5"/><rect x="1269" y="23.6" width="1.5" height="2.4" fill="#62c4f5"/><rect x="1269" y="35.6" width="1.5" height="2.4" fill="#62c4f5"/><rect x="1275" y="24.2" width="1.5" height="1.8" fill="#62c4f5"/><rect x="1275" y="36.2" width="1.5" height="1.8" fill="#62c4f5"/><rect x="1278" y="25.0" width="1.5" height="1.0" fill="#62c4f5"/><rect x="1278" y="37.0" width="1.5" height="1.0" fill="#62c4f5"/><rect x="1281" y="25.4" width="1.5" height="0.6" fill="#62c4f5"/><rect x="1281" y="37.4" width="1.5" height="0.6" fill="#62c4f5"/><rect x="1284" y="23.9" width="1.5" height="2.1" fill="#62c4f5"/><rect x="1284" y="35.9" width="1.5" height="2.1" fill="#62c4f5"/><rect x="1287" y="24.1" width="1.5" height="1.9" fill="#62c4f5"/><rect x="1287" y="36.1" width="1.5" height="1.9" fill="#62c4f5"/><rect x="1296" y="23.5" width="1.5" height="2.5" fill="#62c4f5"/><rect x="1296" y="35.5" width="1.5" height="2.5" fill="#62c4f5"/><rect x="1302" y="24.6" width="1.5" height="1.4" fill="#62c4f5"/><rect x="1302" y="36.6" width="1.5" height="1.4" fill="#62c4f5"/><rect x="1305" y="25.3" width="1.5" height="0.7" fill="#62c4f5"/><rect x="1305" y="37.3" width="1.5" height="0.7" fill="#62c4f5"/><rect x="1308" y="23.2" width="1.5" height="2.8" fill="#62c4f5"/><rect x="1308" y="35.2" width="1.5" height="2.8" fill="#62c4f5"/><rect x="1311" y="23.3" width="1.5" height="2.7" fill="#62c4f5"/><rect x="1311" y="35.3" width="1.5" height="2.7" fill="#62c4f5"/><rect x="1317" y="23.4" width="1.5" height="2.6" fill="#62c4f5"/><rect x="1317" y="35.4" width="1.5" height="2.6" fill="#62c4f5"/><rect x="1332" y="23.5" width="1.5" height="2.5" fill="#62c4f5"/><rect x="1332" y="35.5" width="1.5" height="2.5" fill="#62c4f5"/></svg>
<svg class="a" style="left:432px;top:867.5px" width="11" height="11"><path d="M1 3a3 3 0 0 1 3.2-1.8M0.6 5.2a5 5 0 0 1 2-4" stroke="#d8d8d8" stroke-width="1" fill="none"/><path d="M4.5 10.5Q3.5 6 9.5 3Q10.5 8 4.5 10.5z" fill="#e0e0e0"/><path d="M4.5 10.5L7.5 5.5" stroke="#0b5069" stroke-width="0.7"/></svg>
<svg class="a" style="left:1772px;top:867.5px" width="11" height="11"><path d="M1 3a3 3 0 0 1 3.2-1.8M0.6 5.2a5 5 0 0 1 2-4" stroke="#d8d8d8" stroke-width="1" fill="none"/><path d="M4.5 10.5Q3.5 6 9.5 3Q10.5 8 4.5 10.5z" fill="#e0e0e0"/><path d="M4.5 10.5L7.5 5.5" stroke="#0b5069" stroke-width="0.7"/></svg>
<div class="a" style="left:263.5px;top:905px;width:169px;height:39.5px;background:#2a5a0b"></div>
<div class="a" style="left:263.5px;top:926px;width:169px;height:1.5px;background:#c8d0c0"></div>
<div class="t" style="left:414px;top:907px;font-size:12px;color:#5f8a45;font-style:italic;font-family:'Liberation Serif',serif">fx</div>
<svg class="a" style="left:390px;top:908px" width="14" height="11"><circle cx="4.5" cy="5" r="3.5" fill="#e8e8e8"/><path d="M4 8l1 3" stroke="#e8e8e8" stroke-width="1.5"/><path d="M9 3a3 3 0 0 1 0 4M11 1.5a5 5 0 0 1 0 7" fill="none" stroke="#e8e8e8" stroke-width="1"/></svg>
<svg class="a" style="left:265px;top:927.5px" width="167" height="17"><polygon points="0.6,17 0.6,13.75 10,6.25 12.8,1.56 17.5,1.56 18.4,6.25 20.3,1.56 22.2,5.8 24,1.56 27.8,3.4 32.5,10 36.25,16.6 39,2.5 41.9,3.4 45.6,1.1 53,1.56 56.9,8.1 59.7,6.25 66.25,5.3 69,6.25 70,16.6 72.8,5.3 79.4,5.3 83.1,3.4 86,1.1 88.75,2.5 89.2,16.6 91.6,3.4 98.1,5.3 101,12.8 103.75,8.1 107.5,1.56 110.3,3.4 112.2,15.6 113.1,2.5 115.5,13.75 116.9,1.56 120.6,3.4 126.25,8.1 129,6.25 135.6,4.4 141.25,8.1 147.8,4.8 151.6,8.1 153.4,16.6 153.4,17" fill="#9fd57c"/><rect x="1" y="2" width="11" height="11" fill="#4f6f40" opacity=".85"/><text x="3.5" y="12" font-size="10" fill="#d8e0d0" font-family="Liberation Serif">1</text></svg>
<svg class="a" style="left:263px;top:819px" width="6" height="6"><path d="M0 0h5L0 5z" fill="#f0f0f0"/></svg>
<svg class="a" style="left:263px;top:864px" width="6" height="6"><path d="M0 0h5L0 5z" fill="#f0f0f0"/></svg>
<svg class="a" style="left:263px;top:905px" width="6" height="6"><path d="M0 0h5L0 5z" fill="#f0f0f0"/></svg>
<div class="a" style="left:323.5px;top:721px;width:1px;height:264px;background:#4a90e2"></div>
<svg class="a" style="left:317.5px;top:708px" width="13" height="14"><path d="M1 1h11v8l-5.5 4L1 9z" fill="#4a90e2"/></svg>
<svg class="a" style="left:497px;top:819px" width="4" height="41"><path d="M2 0v41" stroke="#fff" stroke-width="2"/><path d="M2 0v41" stroke="#111" stroke-width="2" stroke-dasharray="3 3"/></svg>
<div class="a" style="left:498px;top:864px;width:1px;height:40px;background:#4a90e2"></div>
<svg class="a" style="left:496px;top:819.5px" width="36" height="36"><g transform="rotate(45 18 18)"><path d="M5.5 10.5h25v5.2a1.6 1.6 0 0 0 0 4.6v5.2h-25v-5.2a1.6 1.6 0 0 0 0-4.6z" fill="#ececec" stroke="#0a0a0a" stroke-width="2.2" stroke-linejoin="round"/><path d="M11 18h14M11 15.5v5M25 15.5v5" stroke="#111" stroke-width="1.8"/><circle cx="18" cy="18" r="1.8" fill="#111"/></g></svg>
<div class="a" style="left:1818px;top:743px;width:12px;height:114px;background:#333;border-radius:6px"></div>
<div class="a" style="left:1817.5px;top:747.5px;width:13px;height:13px;background:#121212;border:2.5px solid #d8d8d8;border-radius:50%"></div>
<div class="a" style="left:1817.5px;top:843.0px;width:13px;height:13px;background:#121212;border:2.5px solid #d8d8d8;border-radius:50%"></div>
<div class="a" style="left:1818px;top:866px;width:12px;height:115px;background:#333;border-radius:6px"></div>
<div class="a" style="left:1817.5px;top:867.5px;width:13px;height:13px;background:#121212;border:2.5px solid #d8d8d8;border-radius:50%"></div>
<div class="a" style="left:1817.5px;top:963.0px;width:13px;height:13px;background:#121212;border:2.5px solid #d8d8d8;border-radius:50%"></div>
<div class="a" style="left:72px;top:985px;width:1750px;height:12px;background:#333"></div>
<div class="a" style="left:72px;top:985px;width:258px;height:12px;background:#505050;border-radius:6px"></div>
<div class="a" style="left:69.5px;top:984.5px;width:13px;height:13px;background:#121212;border:2.5px solid #d8d8d8;border-radius:50%"></div>
<div class="a" style="left:323.5px;top:984.5px;width:13px;height:13px;background:#121212;border:2.5px solid #d8d8d8;border-radius:50%"></div>
<div class="a" style="left:1864px;top:682px;width:17px;height:295px;background:#000"></div>
<div class="a" style="left:1865px;top:683px;width:7px;height:8px;background:#111"></div>
<div class="a" style="left:1873px;top:683px;width:7px;height:8px;background:#111"></div>
<div class="a" style="left:1864px;top:974px;width:17px;height:1.5px;background:#a8b82a"></div>
<svg class="a" style="left:1882px;top:685px" width="3" height="292"><rect x="0" y="0" width="2" height="1.2" fill="#8a8a8a"/><rect x="0" y="3" width="2" height="1.2" fill="#8a8a8a"/><rect x="0" y="6" width="2" height="1.2" fill="#8a8a8a"/><rect x="0" y="9" width="2" height="1.2" fill="#8a8a8a"/><rect x="0" y="12" width="2" height="1.2" fill="#8a8a8a"/><rect x="0" y="15" width="2" height="1.2" fill="#8a8a8a"/><rect x="0" y="18" width="2" height="1.2" fill="#8a8a8a"/><rect x="0" y="21" width="2" height="1.2" fill="#8a8a8a"/><rect x="0" y="24" width="2" height="1.2" fill="#8a8a8a"/><rect x="0" y="27" width="2" height="1.2" fill="#8a8a8a"/><rect x="0" y="30" width="2" height="1.2" fill="#8a8a8a"/><rect x="0" y="33" width="2" height="1.2" fill="#8a8a8a"/><rect x="0" y="36" width="2" height="1.2" fill="#8a8a8a"/><rect x="0" y="39" width="2" height="1.2" fill="#8a8a8a"/><rect x="0" y="42" width="2" height="1.2" fill="#8a8a8a"/><rect x="0" y="45" width="2" height="1.2" fill="#8a8a8a"/><rect x="0" y="48" width="2" height="1.2" fill="#8a8a8a"/><rect x="0" y="51" width="2" height="1.2" fill="#8a8a8a"/><rect x="0" y="54" width="2" height="1.2" fill="#8a8a8a"/><rect x="0" y="57" width="2" height="1.2" fill="#8a8a8a"/><rect x="0" y="60" width="2" height="1.2" fill="#8a8a8a"/><rect x="0" y="63" width="2" height="1.2" fill="#8a8a8a"/><rect x="0" y="66" width="2" height="1.2" fill="#8a8a8a"/><rect x="0" y="69" width="2" height="1.2" fill="#8a8a8a"/><rect x="0" y="72" width="2" height="1.2" fill="#8a8a8a"/><rect x="0" y="75" width="2" height="1.2" fill="#8a8a8a"/><rect x="0" y="78" width="2" height="1.2" fill="#8a8a8a"/><rect x="0" y="81" width="2" height="1.2" fill="#8a8a8a"/><rect x="0" y="84" width="2" height="1.2" fill="#8a8a8a"/><rect x="0" y="87" width="2" height="1.2" fill="#8a8a8a"/><rect x="0" y="90" width="2" height="1.2" fill="#8a8a8a"/><rect x="0" y="93" width="2" height="1.2" fill="#8a8a8a"/><rect x="0" y="96" width="2" height="1.2" fill="#8a8a8a"/><rect x="0" y="99" width="2" height="1.2" fill="#8a8a8a"/><rect x="0" y="102" width="2" height="1.2" fill="#8a8a8a"/><rect x="0" y="105" width="2" height="1.2" fill="#8a8a8a"/><rect x="0" y="108" width="2" height="1.2" fill="#8a8a8a"/><rect x="0" y="111" width="2" height="1.2" fill="#8a8a8a"/><rect x="0" y="114" width="2" height="1.2" fill="#8a8a8a"/><rect x="0" y="117" width="2" height="1.2" fill="#8a8a8a"/><rect x="0" y="120" width="2" height="1.2" fill="#8a8a8a"/><rect x="0" y="123" width="2" height="1.2" fill="#8a8a8a"/><rect x="0" y="126" width="2" height="1.2" fill="#8a8a8a"/><rect x="0" y="129" width="2" height="1.2" fill="#8a8a8a"/><rect x="0" y="132" width="2" height="1.2" fill="#8a8a8a"/><rect x="0" y="135" width="2" height="1.2" fill="#8a8a8a"/><rect x="0" y="138" width="2" height="1.2" fill="#8a8a8a"/><rect x="0" y="141" width="2" height="1.2" fill="#8a8a8a"/><rect x="0" y="144" width="2" height="1.2" fill="#8a8a8a"/><rect x="0" y="147" width="2" height="1.2" fill="#8a8a8a"/><rect x="0" y="150" width="2" height="1.2" fill="#8a8a8a"/><rect x="0" y="153" width="2" height="1.2" fill="#8a8a8a"/><rect x="0" y="156" width="2" height="1.2" fill="#8a8a8a"/><rect x="0" y="159" width="2" height="1.2" fill="#8a8a8a"/><rect x="0" y="162" width="2" height="1.2" fill="#8a8a8a"/><rect x="0" y="165" width="2" height="1.2" fill="#8a8a8a"/><rect x="0" y="168" width="2" height="1.2" fill="#8a8a8a"/><rect x="0" y="171" width="2" height="1.2" fill="#8a8a8a"/><rect x="0" y="174" width="2" height="1.2" fill="#8a8a8a"/><rect x="0" y="177" width="2" height="1.2" fill="#8a8a8a"/><rect x="0" y="180" width="2" height="1.2" fill="#8a8a8a"/><rect x="0" y="183" width="2" height="1.2" fill="#8a8a8a"/><rect x="0" y="186" width="2" height="1.2" fill="#8a8a8a"/><rect x="0" y="189" width="2" height="1.2" fill="#8a8a8a"/><rect x="0" y="192" width="2" height="1.2" fill="#8a8a8a"/><rect x="0" y="195" width="2" height="1.2" fill="#8a8a8a"/><rect x="0" y="198" width="2" height="1.2" fill="#8a8a8a"/><rect x="0" y="201" width="2" height="1.2" fill="#8a8a8a"/><rect x="0" y="204" width="2" height="1.2" fill="#8a8a8a"/><rect x="0" y="207" width="2" height="1.2" fill="#8a8a8a"/><rect x="0" y="210" width="2" height="1.2" fill="#8a8a8a"/><rect x="0" y="213" width="2" height="1.2" fill="#8a8a8a"/><rect x="0" y="216" width="2" height="1.2" fill="#8a8a8a"/><rect x="0" y="219" width="2" height="1.2" fill="#8a8a8a"/><rect x="0" y="222" width="2" height="1.2" fill="#8a8a8a"/><rect x="0" y="225" width="2" height="1.2" fill="#8a8a8a"/><rect x="0" y="228" width="2" height="1.2" fill="#8a8a8a"/><rect x="0" y="231" width="2" height="1.2" fill="#8a8a8a"/><rect x="0" y="234" width="2" height="1.2" fill="#8a8a8a"/><rect x="0" y="237" width="2" height="1.2" fill="#8a8a8a"/><rect x="0" y="240" width="2" height="1.2" fill="#8a8a8a"/><rect x="0" y="243" width="2" height="1.2" fill="#8a8a8a"/><rect x="0" y="246" width="2" height="1.2" fill="#8a8a8a"/><rect x="0" y="249" width="2" height="1.2" fill="#8a8a8a"/><rect x="0" y="252" width="2" height="1.2" fill="#8a8a8a"/><rect x="0" y="255" width="2" height="1.2" fill="#8a8a8a"/><rect x="0" y="258" width="2" height="1.2" fill="#8a8a8a"/><rect x="0" y="261" width="2" height="1.2" fill="#8a8a8a"/><rect x="0" y="264" width="2" height="1.2" fill="#8a8a8a"/><rect x="0" y="267" width="2" height="1.2" fill="#8a8a8a"/><rect x="0" y="270" width="2" height="1.2" fill="#8a8a8a"/><rect x="0" y="273" width="2" height="1.2" fill="#8a8a8a"/><rect x="0" y="276" width="2" height="1.2" fill="#8a8a8a"/><rect x="0" y="279" width="2" height="1.2" fill="#8a8a8a"/><rect x="0" y="282" width="2" height="1.2" fill="#8a8a8a"/><rect x="0" y="285" width="2" height="1.2" fill="#8a8a8a"/><rect x="0" y="288" width="2" height="1.2" fill="#8a8a8a"/></svg>
<div class="a" style="left:1883px;top:691.9px;width:4px;height:1.2px;background:#9a9a9a"></div>
<div class="t" style="left:1890px;top:686.9px;font-size:11px;color:#a8a8a8">0</div>
<div class="a" style="left:1883px;top:719.8px;width:4px;height:1.2px;background:#9a9a9a"></div>
<div class="t" style="left:1890px;top:714.8px;font-size:11px;color:#a8a8a8">-6</div>
<div class="a" style="left:1883px;top:747.8px;width:4px;height:1.2px;background:#9a9a9a"></div>
<div class="t" style="left:1890px;top:742.8px;font-size:11px;color:#a8a8a8">-12</div>
<div class="a" style="left:1883px;top:775.7px;width:4px;height:1.2px;background:#9a9a9a"></div>
<div class="t" style="left:1890px;top:770.7px;font-size:11px;color:#a8a8a8">-18</div>
<div class="a" style="left:1883px;top:803.7px;width:4px;height:1.2px;background:#9a9a9a"></div>
<div class="t" style="left:1890px;top:798.7px;font-size:11px;color:#a8a8a8">-24</div>
<div class="a" style="left:1883px;top:831.6px;width:4px;height:1.2px;background:#9a9a9a"></div>
<div class="t" style="left:1890px;top:826.6px;font-size:11px;color:#a8a8a8">-30</div>
<div class="a" style="left:1883px;top:859.5px;width:4px;height:1.2px;background:#9a9a9a"></div>
<div class="t" style="left:1890px;top:854.5px;font-size:11px;color:#a8a8a8">-36</div>
<div class="a" style="left:1883px;top:887.5px;width:4px;height:1.2px;background:#9a9a9a"></div>
<div class="t" style="left:1890px;top:882.5px;font-size:11px;color:#a8a8a8">-42</div>
<div class="a" style="left:1883px;top:915.4px;width:4px;height:1.2px;background:#9a9a9a"></div>
<div class="t" style="left:1890px;top:910.4px;font-size:11px;color:#a8a8a8">-48</div>
<div class="a" style="left:1883px;top:943.4px;width:4px;height:1.2px;background:#9a9a9a"></div>
<div class="t" style="left:1890px;top:938.4px;font-size:11px;color:#a8a8a8">-54</div>
<div class="a" style="left:1883px;top:971.3px;width:4px;height:1.2px;background:#9a9a9a"></div>
<div class="t" style="left:1890px;top:966.3px;font-size:11px;color:#a8a8a8">dB</div>
<svg class="a" style="left:1864px;top:984px" width="16" height="9"><circle cx="3.5" cy="4.5" r="2.4" fill="none" stroke="#b0b0b0" stroke-width="1.2"/><circle cx="11.5" cy="4.5" r="2.4" fill="none" stroke="#b0b0b0" stroke-width="1.2"/></svg>
<script>(function(){var es=document.querySelectorAll('.f');for(var i=0;i<es.length;i++){var e=es[i];var w=parseFloat(e.style.width);e.style.width='auto';var sw=e.getBoundingClientRect().width;if(sw>0&&w>0){var r=w/sw;if(r>3)r=3;if(r<0.3)r=0.3;e.style.transformOrigin='0 50%';e.style.transform='scaleX('+r.toFixed(4)+')';}}})();</script>
</body></html>
